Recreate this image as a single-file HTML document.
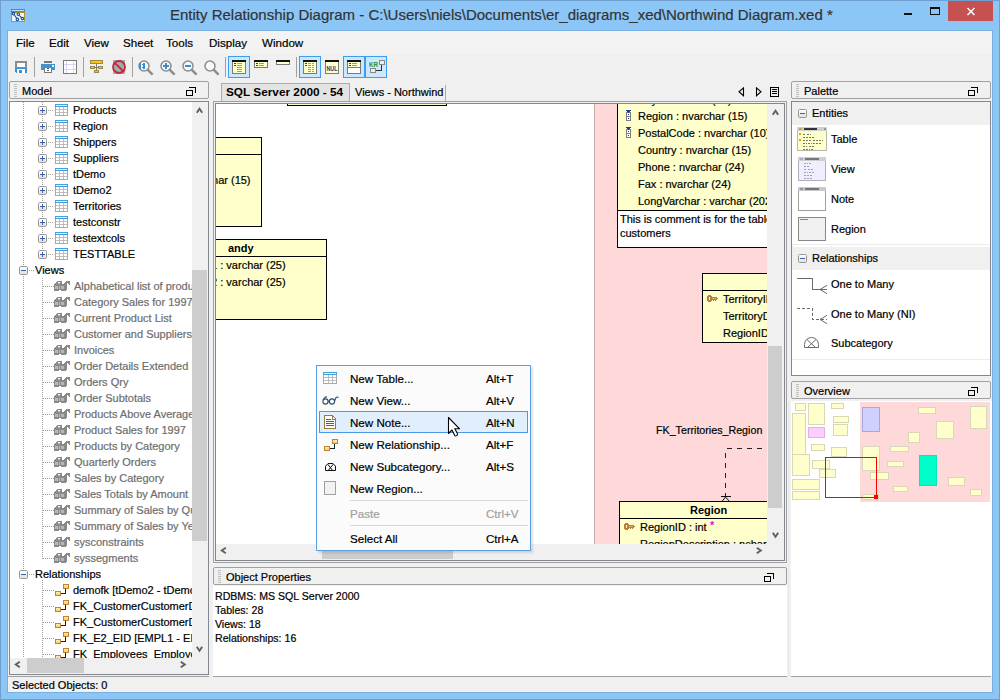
<!DOCTYPE html><html><head><meta charset="utf-8"><style>
html,body{margin:0;padding:0;}
body{width:1000px;height:700px;overflow:hidden;position:relative;background:#8cc6f7;font-family:'Liberation Sans', sans-serif;}
div,svg{box-sizing:border-box;}
.t{-webkit-text-stroke:0.2px currentColor;}
</style></head><body>
<div style="position:absolute;left:0px;top:0px;width:1000px;height:700px;border:1px solid #6e9fcf;"></div>
<div style="position:absolute;left:7px;top:30px;width:986px;height:663px;border:1px solid #79aee0;"></div>
<div style="position:absolute;left:8px;top:31px;width:984px;height:661px;background:#f0f0f0;"></div>
<svg style="position:absolute;left:11px;top:9px;" width="14" height="13" viewBox="0 0 14 13" shape-rendering="crispEdges"><rect x="0.5" y="3.5" width="13" height="9" fill="#eef7ff" stroke="#b8902c"/>
<rect x="0" y="0" width="14" height="3" fill="#5a86b8"/><rect x="1" y="1" width="12" height="1" fill="#c4e0f4"/>
<g fill="none" stroke="#1a4f93" stroke-width="1.1" shape-rendering="geometricPrecision">
<circle cx="2.5" cy="4.6" r="1.25"/><circle cx="7.3" cy="5.3" r="1.25"/><circle cx="6.4" cy="10.4" r="1.25"/><circle cx="11.4" cy="9.6" r="1.25"/>
<path d="M3.3 5.7 L5.6 9.2 M8.2 6.3 L10.5 8.6"/></g></svg>
<div class="t" style="position:absolute;left:170px;top:5px;font:normal 15px/20px 'Liberation Sans', sans-serif;color:#333;white-space:pre;">Entity Relationship Diagram - C:\Users\niels\Documents\er_diagrams_xed\Northwind Diagram.xed *</div>
<div style="position:absolute;left:904px;top:13px;width:8px;height:2px;background:#111;"></div>
<div style="position:absolute;left:930px;top:7px;width:10px;height:8px;border:1px solid #111;border-top-width:2px;"></div>
<div style="position:absolute;left:948px;top:1px;width:45px;height:20px;background:#c75050;"></div>
<svg style="position:absolute;left:966px;top:7px;" width="10" height="9" viewBox="0 0 10 9" shape-rendering="crispEdges"><path d="M1.5 1 L8.5 8 M8.5 1 L1.5 8" stroke="#fff" stroke-width="1.5" shape-rendering="geometricPrecision"/></svg>
<div style="position:absolute;left:8px;top:31px;width:984px;height:23px;background:#f3f3f3;"></div>
<div class="t" style="position:absolute;left:16px;top:35px;font:normal 11px/16px 'Liberation Sans', sans-serif;color:#000;white-space:pre;font-size:11.6px;">File</div>
<div class="t" style="position:absolute;left:49px;top:35px;font:normal 11px/16px 'Liberation Sans', sans-serif;color:#000;white-space:pre;font-size:11.6px;">Edit</div>
<div class="t" style="position:absolute;left:84px;top:35px;font:normal 11px/16px 'Liberation Sans', sans-serif;color:#000;white-space:pre;font-size:11.6px;">View</div>
<div class="t" style="position:absolute;left:123px;top:35px;font:normal 11px/16px 'Liberation Sans', sans-serif;color:#000;white-space:pre;font-size:11.6px;">Sheet</div>
<div class="t" style="position:absolute;left:166px;top:35px;font:normal 11px/16px 'Liberation Sans', sans-serif;color:#000;white-space:pre;font-size:11.6px;">Tools</div>
<div class="t" style="position:absolute;left:209px;top:35px;font:normal 11px/16px 'Liberation Sans', sans-serif;color:#000;white-space:pre;font-size:11.6px;">Display</div>
<div class="t" style="position:absolute;left:262px;top:35px;font:normal 11px/16px 'Liberation Sans', sans-serif;color:#000;white-space:pre;font-size:11.6px;">Window</div>
<svg style="position:absolute;left:15px;top:61px;" width="12" height="12" viewBox="0 0 12 12" shape-rendering="crispEdges"><rect x="0" y="0" width="12" height="7" fill="#8c8c8c"/><rect x="2" y="2" width="8" height="4" fill="#fff"/><rect x="0" y="7" width="12" height="5" fill="#3d8fd0"/><rect x="2" y="8" width="8" height="4" fill="#fff"/><rect x="4" y="9" width="3" height="3" fill="#3d8fd0"/><rect x="0" y="11" width="1" height="1" fill="#f0f0f0"/></svg>
<div style="position:absolute;left:34px;top:57px;width:1px;height:20px;background:#a0a0a0;"></div>
<svg style="position:absolute;left:41px;top:61px;" width="15" height="12" viewBox="0 0 15 12" shape-rendering="crispEdges"><rect x="3" y="0" width="8" height="2" fill="#7a7a7a"/><rect x="0" y="3" width="14" height="6" fill="#3f93cf"/><rect x="11" y="4" width="2" height="2" fill="#e8f4ff"/><rect x="3" y="7" width="8" height="5" fill="#7a7a7a"/><rect x="4" y="7" width="6" height="4" fill="#fff"/><rect x="6" y="7" width="2" height="1" fill="#555"/><rect x="6" y="9" width="2" height="1" fill="#555"/></svg>
<svg style="position:absolute;left:63px;top:60px;" width="14" height="14" viewBox="0 0 14 14" shape-rendering="crispEdges"><rect x="0.5" y="0.5" width="13" height="13" fill="#fff" stroke="#7a7a7a"/><path d="M3.5 1V13 M10.5 1V13 M1 4.5H13 M1 9.5H13" stroke="#d4d4ff"/></svg>
<div style="position:absolute;left:83px;top:57px;width:1px;height:20px;background:#a0a0a0;"></div>
<svg style="position:absolute;left:90px;top:60px;" width="13" height="13" viewBox="0 0 13 13" shape-rendering="crispEdges"><rect x="0" y="0" width="13" height="4" fill="#f5b800"/><rect x="0.5" y="0.5" width="12" height="3" fill="#ffc400" stroke="#9a8a50"/><rect x="0.5" y="6.5" width="4" height="2" fill="#ffc400" stroke="#9a8a50"/><rect x="8.5" y="6.5" width="4" height="2" fill="#ffc400" stroke="#9a8a50"/><rect x="4.5" y="10.5" width="4" height="2" fill="#ffc400" stroke="#9a8a50"/><path d="M6.5 4V10 M5 7.5H8" stroke="#7a7a7a"/></svg>
<svg style="position:absolute;left:112px;top:59px;" width="15" height="16" viewBox="0 0 15 16" shape-rendering="crispEdges"><rect x="1" y="1" width="12" height="14" fill="#a9a9a9"/><circle cx="7" cy="8" r="6" fill="none" stroke="#c4283a" stroke-width="1.8" shape-rendering="geometricPrecision"/><path d="M2.8 3.8 L11.2 12.2" stroke="#c4283a" stroke-width="1.8" shape-rendering="geometricPrecision"/></svg>
<div style="position:absolute;left:132px;top:57px;width:1px;height:20px;background:#a0a0a0;"></div>
<svg style="position:absolute;left:138px;top:59px;" width="17" height="17" viewBox="0 0 17 17" shape-rendering="crispEdges"><g shape-rendering="geometricPrecision"><circle cx="6" cy="7" r="5" fill="#f8f8f8" stroke="#8c8c8c" stroke-width="1.5"/><path d="M9.4 10.4 L14.6 15.6" stroke="#8c8c8c" stroke-width="2.4"/></g><rect x="1" y="4" width="2" height="6" fill="#3a8fd0"/><rect x="5" y="4" width="2" height="6" fill="#3a8fd0"/><rect x="4" y="5" width="1" height="1" fill="#3a8fd0"/><rect x="4" y="8" width="1" height="1" fill="#3a8fd0"/></svg>
<svg style="position:absolute;left:160px;top:59px;" width="17" height="17" viewBox="0 0 17 17" shape-rendering="crispEdges"><g shape-rendering="geometricPrecision"><circle cx="6" cy="7" r="5" fill="#f8f8f8" stroke="#8c8c8c" stroke-width="1.5"/><path d="M9.4 10.4 L14.6 15.6" stroke="#8c8c8c" stroke-width="2.4"/></g><rect x="3" y="6" width="6" height="2" fill="#3a8fd0"/><rect x="5" y="4" width="2" height="6" fill="#3a8fd0"/></svg>
<svg style="position:absolute;left:182px;top:59px;" width="17" height="17" viewBox="0 0 17 17" shape-rendering="crispEdges"><g shape-rendering="geometricPrecision"><circle cx="6" cy="7" r="5" fill="#f8f8f8" stroke="#8c8c8c" stroke-width="1.5"/><path d="M9.4 10.4 L14.6 15.6" stroke="#8c8c8c" stroke-width="2.4"/></g><rect x="3" y="6" width="6" height="2" fill="#3a8fd0"/></svg>
<svg style="position:absolute;left:204px;top:59px;" width="17" height="17" viewBox="0 0 17 17" shape-rendering="crispEdges"><g shape-rendering="geometricPrecision"><circle cx="6" cy="7" r="5" fill="#f8f8f8" stroke="#8c8c8c" stroke-width="1.5"/><path d="M9.4 10.4 L14.6 15.6" stroke="#8c8c8c" stroke-width="2.4"/></g></svg>
<div style="position:absolute;left:225px;top:57px;width:1px;height:20px;background:#a0a0a0;"></div>
<div style="position:absolute;left:228px;top:56px;width:22px;height:22px;background:#cce8ff;border:1px solid #3d9df0;"></div>
<svg style="position:absolute;left:232px;top:60px;" width="14" height="14" viewBox="0 0 14 14" shape-rendering="crispEdges"><rect x="0.5" y="0.5" width="13" height="13" fill="#ffffcc" stroke="#7a7a7a"/><rect x="0" y="0" width="14" height="2" fill="#111"/><rect x="2" y="3" width="2" height="1" fill="#1f3f8f"/><rect x="5" y="3" width="5" height="1" fill="#999"/><rect x="2" y="5" width="2" height="1" fill="#1f3f8f"/><rect x="5" y="5" width="5" height="1" fill="#999"/><rect x="5" y="7" width="5" height="1" fill="#999"/><rect x="5" y="9" width="5" height="1" fill="#999"/><rect x="5" y="11" width="5" height="1" fill="#999"/></svg>
<svg style="position:absolute;left:254px;top:60px;" width="14" height="8" viewBox="0 0 14 8" shape-rendering="crispEdges"><rect x="0.5" y="0.5" width="13" height="7" fill="#ffffcc" stroke="#7a7a7a"/><rect x="0" y="0" width="14" height="2" fill="#111"/><rect x="2" y="3" width="2" height="1" fill="#1f3f8f"/><rect x="5" y="3" width="5" height="1" fill="#999"/><rect x="2" y="5" width="2" height="1" fill="#1f3f8f"/><rect x="5" y="5" width="5" height="1" fill="#999"/></svg>
<svg style="position:absolute;left:276px;top:60px;" width="14" height="5" viewBox="0 0 14 5" shape-rendering="crispEdges"><rect x="0.5" y="0.5" width="13" height="4" fill="#ffffcc" stroke="#7a7a7a"/><rect x="0" y="0" width="14" height="2" fill="#111"/></svg>
<div style="position:absolute;left:296px;top:57px;width:1px;height:20px;background:#a0a0a0;"></div>
<div style="position:absolute;left:299px;top:56px;width:22px;height:22px;background:#cce8ff;border:1px solid #3d9df0;"></div>
<svg style="position:absolute;left:303px;top:60px;" width="14" height="14" viewBox="0 0 14 14" shape-rendering="crispEdges"><rect x="0.5" y="0.5" width="13" height="13" fill="#ffffcc" stroke="#7a7a7a"/><rect x="0" y="0" width="14" height="2" fill="#111"/><rect x="2" y="3" width="2" height="1" fill="#1f3f8f"/><rect x="2" y="5" width="2" height="1" fill="#1f3f8f"/><rect x="5" y="3" width="3" height="1" fill="#999"/><rect x="9" y="3" width="2" height="1" fill="#999"/><rect x="5" y="5" width="3" height="1" fill="#999"/><rect x="9" y="5" width="2" height="1" fill="#999"/><rect x="5" y="7" width="3" height="1" fill="#999"/><rect x="9" y="7" width="2" height="1" fill="#999"/><rect x="5" y="9" width="3" height="1" fill="#999"/><rect x="9" y="9" width="2" height="1" fill="#999"/><rect x="5" y="11" width="3" height="1" fill="#999"/><rect x="9" y="11" width="2" height="1" fill="#999"/></svg>
<svg style="position:absolute;left:325px;top:60px;" width="14" height="14" viewBox="0 0 14 14" shape-rendering="crispEdges"><rect x="0.5" y="0.5" width="13" height="13" fill="#ffffcc" stroke="#7a7a7a"/><rect x="0" y="0" width="14" height="2" fill="#111"/></svg>
<svg style="position:absolute;left:325px;top:64px;" width="14" height="7" viewBox="0 0 14 7" shape-rendering="crispEdges"><text x="7" y="6.5" text-anchor="middle" font-family="Liberation Sans" font-weight="bold" font-size="7.5" fill="#1a3a80" textLength="11" lengthAdjust="spacingAndGlyphs">NUL</text></svg>
<div style="position:absolute;left:343px;top:56px;width:22px;height:22px;background:#cce8ff;border:1px solid #3d9df0;"></div>
<svg style="position:absolute;left:347px;top:60px;" width="14" height="14" viewBox="0 0 14 14" shape-rendering="crispEdges"><rect x="0.5" y="0.5" width="13" height="13" fill="#fff" stroke="#7a7a7a"/><rect x="0" y="0" width="14" height="2" fill="#111"/><rect x="1" y="2" width="12" height="5" fill="#ffffcc"/><rect x="2" y="3" width="2" height="1" fill="#1f3f8f"/><rect x="5" y="3" width="5" height="1" fill="#999"/><rect x="2" y="5" width="2" height="1" fill="#1f3f8f"/><rect x="5" y="5" width="5" height="1" fill="#999"/><rect x="0" y="7" width="14" height="1" fill="#7a7a7a"/></svg>
<div style="position:absolute;left:365px;top:56px;width:22px;height:22px;background:#cce8ff;border:1px solid #3d9df0;"></div>
<svg style="position:absolute;left:369px;top:59px;" width="16" height="16" viewBox="0 0 16 16" shape-rendering="crispEdges"><rect x="10.5" y="1.5" width="5" height="4" fill="#eee" stroke="#888"/><rect x="1.5" y="9.5" width="5" height="4" fill="#eee" stroke="#888"/><path d="M7 11.5H12.5V6" fill="none" stroke="#333"/><text x="0" y="8" font-family="Liberation Sans" font-size="7" font-weight="bold" fill="#2f8f2f" textLength="9" lengthAdjust="spacingAndGlyphs">KR</text></svg>
<div style="position:absolute;left:9px;top:81px;width:200px;height:18px;border:1px solid #a0a0a0;border-radius:2px;background:#f0f0f0;"></div>
<svg style="position:absolute;left:14px;top:84px;" width="3" height="14" viewBox="0 0 3 14" shape-rendering="crispEdges"><rect x="0" y="0" width="3" height="1" fill="#c0c0c0"/><rect x="0" y="2" width="3" height="1" fill="#c0c0c0"/><rect x="0" y="4" width="3" height="1" fill="#c0c0c0"/><rect x="0" y="6" width="3" height="1" fill="#c0c0c0"/><rect x="0" y="8" width="3" height="1" fill="#c0c0c0"/><rect x="0" y="10" width="3" height="1" fill="#c0c0c0"/><rect x="0" y="12" width="3" height="1" fill="#c0c0c0"/></svg>
<div class="t" style="position:absolute;left:22px;top:83px;font:normal 11px/16px 'Liberation Sans', sans-serif;color:#000;white-space:pre;">Model</div>
<svg style="position:absolute;left:186px;top:87px;" width="10" height="9" viewBox="0 0 10 9" shape-rendering="crispEdges"><path d="M3 0.5H9.5V6" fill="none" stroke="#000"/><rect x="0.5" y="3.5" width="6" height="5" fill="none" stroke="#000" stroke-width="1"/></svg>
<div style="position:absolute;left:9px;top:101px;width:200px;height:574px;border:1px solid #828790;background:#fff;"></div>
<div style="position:absolute;left:10px;top:102px;width:182px;height:556px;overflow:hidden;">
<div style="position:absolute;left:13px;top:0px;width:1px;height:164px;background:repeating-linear-gradient(to bottom,#a0a0a0 0,#a0a0a0 1px,transparent 1px,transparent 2px);"></div>
<div style="position:absolute;left:13px;top:174px;width:1px;height:294px;background:repeating-linear-gradient(to bottom,#a0a0a0 0,#a0a0a0 1px,transparent 1px,transparent 2px);"></div>
<div style="position:absolute;left:13px;top:482px;width:1px;height:74px;background:repeating-linear-gradient(to bottom,#a0a0a0 0,#a0a0a0 1px,transparent 1px,transparent 2px);"></div>
<div style="position:absolute;left:32px;top:0px;width:1px;height:153px;background:repeating-linear-gradient(to bottom,#a0a0a0 0,#a0a0a0 1px,transparent 1px,transparent 2px);"></div>
<svg style="position:absolute;left:28px;top:4px" width="9" height="9" viewBox="0 0 9 9" shape-rendering="crispEdges"><rect x="1" y="1" width="7" height="4" fill="#fbfbfb"/><rect x="1" y="5" width="7" height="3" fill="#e6e6e6"/><rect x="0.5" y="0.5" width="8" height="8" rx="1.2" fill="none" stroke="#979797" shape-rendering="geometricPrecision"/><rect x="2" y="4" width="5" height="1" fill="#3d5ea8"/><rect x="4" y="2" width="1" height="5" fill="#3d5ea8"/></svg>
<div style="position:absolute;left:38px;top:8px;width:6px;height:1px;background:repeating-linear-gradient(to right,#a0a0a0 0,#a0a0a0 1px,transparent 1px,transparent 2px);"></div>
<svg style="position:absolute;left:45px;top:2px" width="13" height="12" viewBox="0 0 13 12" shape-rendering="crispEdges"><rect x="0.5" y="1.5" width="12" height="10" fill="#fff" stroke="#a9a9a9"/><rect x="0" y="0" width="13" height="3" fill="#47a0d8"/><rect x="1" y="1" width="11" height="1" fill="#dff0fb"/><path d="M4.5 3V11 M8.5 3V11 M1 5.5H12 M1 8.5H12" stroke="#bdbdbd"/></svg>
<div class="t" style="position:absolute;left:63px;top:0px;font:11px/16px 'Liberation Sans', sans-serif;color:#000;white-space:pre;">Products</div>
<svg style="position:absolute;left:28px;top:20px" width="9" height="9" viewBox="0 0 9 9" shape-rendering="crispEdges"><rect x="1" y="1" width="7" height="4" fill="#fbfbfb"/><rect x="1" y="5" width="7" height="3" fill="#e6e6e6"/><rect x="0.5" y="0.5" width="8" height="8" rx="1.2" fill="none" stroke="#979797" shape-rendering="geometricPrecision"/><rect x="2" y="4" width="5" height="1" fill="#3d5ea8"/><rect x="4" y="2" width="1" height="5" fill="#3d5ea8"/></svg>
<div style="position:absolute;left:38px;top:24px;width:6px;height:1px;background:repeating-linear-gradient(to right,#a0a0a0 0,#a0a0a0 1px,transparent 1px,transparent 2px);"></div>
<svg style="position:absolute;left:45px;top:18px" width="13" height="12" viewBox="0 0 13 12" shape-rendering="crispEdges"><rect x="0.5" y="1.5" width="12" height="10" fill="#fff" stroke="#a9a9a9"/><rect x="0" y="0" width="13" height="3" fill="#47a0d8"/><rect x="1" y="1" width="11" height="1" fill="#dff0fb"/><path d="M4.5 3V11 M8.5 3V11 M1 5.5H12 M1 8.5H12" stroke="#bdbdbd"/></svg>
<div class="t" style="position:absolute;left:63px;top:16px;font:11px/16px 'Liberation Sans', sans-serif;color:#000;white-space:pre;">Region</div>
<svg style="position:absolute;left:28px;top:36px" width="9" height="9" viewBox="0 0 9 9" shape-rendering="crispEdges"><rect x="1" y="1" width="7" height="4" fill="#fbfbfb"/><rect x="1" y="5" width="7" height="3" fill="#e6e6e6"/><rect x="0.5" y="0.5" width="8" height="8" rx="1.2" fill="none" stroke="#979797" shape-rendering="geometricPrecision"/><rect x="2" y="4" width="5" height="1" fill="#3d5ea8"/><rect x="4" y="2" width="1" height="5" fill="#3d5ea8"/></svg>
<div style="position:absolute;left:38px;top:40px;width:6px;height:1px;background:repeating-linear-gradient(to right,#a0a0a0 0,#a0a0a0 1px,transparent 1px,transparent 2px);"></div>
<svg style="position:absolute;left:45px;top:34px" width="13" height="12" viewBox="0 0 13 12" shape-rendering="crispEdges"><rect x="0.5" y="1.5" width="12" height="10" fill="#fff" stroke="#a9a9a9"/><rect x="0" y="0" width="13" height="3" fill="#47a0d8"/><rect x="1" y="1" width="11" height="1" fill="#dff0fb"/><path d="M4.5 3V11 M8.5 3V11 M1 5.5H12 M1 8.5H12" stroke="#bdbdbd"/></svg>
<div class="t" style="position:absolute;left:63px;top:32px;font:11px/16px 'Liberation Sans', sans-serif;color:#000;white-space:pre;">Shippers</div>
<svg style="position:absolute;left:28px;top:52px" width="9" height="9" viewBox="0 0 9 9" shape-rendering="crispEdges"><rect x="1" y="1" width="7" height="4" fill="#fbfbfb"/><rect x="1" y="5" width="7" height="3" fill="#e6e6e6"/><rect x="0.5" y="0.5" width="8" height="8" rx="1.2" fill="none" stroke="#979797" shape-rendering="geometricPrecision"/><rect x="2" y="4" width="5" height="1" fill="#3d5ea8"/><rect x="4" y="2" width="1" height="5" fill="#3d5ea8"/></svg>
<div style="position:absolute;left:38px;top:56px;width:6px;height:1px;background:repeating-linear-gradient(to right,#a0a0a0 0,#a0a0a0 1px,transparent 1px,transparent 2px);"></div>
<svg style="position:absolute;left:45px;top:50px" width="13" height="12" viewBox="0 0 13 12" shape-rendering="crispEdges"><rect x="0.5" y="1.5" width="12" height="10" fill="#fff" stroke="#a9a9a9"/><rect x="0" y="0" width="13" height="3" fill="#47a0d8"/><rect x="1" y="1" width="11" height="1" fill="#dff0fb"/><path d="M4.5 3V11 M8.5 3V11 M1 5.5H12 M1 8.5H12" stroke="#bdbdbd"/></svg>
<div class="t" style="position:absolute;left:63px;top:48px;font:11px/16px 'Liberation Sans', sans-serif;color:#000;white-space:pre;">Suppliers</div>
<svg style="position:absolute;left:28px;top:68px" width="9" height="9" viewBox="0 0 9 9" shape-rendering="crispEdges"><rect x="1" y="1" width="7" height="4" fill="#fbfbfb"/><rect x="1" y="5" width="7" height="3" fill="#e6e6e6"/><rect x="0.5" y="0.5" width="8" height="8" rx="1.2" fill="none" stroke="#979797" shape-rendering="geometricPrecision"/><rect x="2" y="4" width="5" height="1" fill="#3d5ea8"/><rect x="4" y="2" width="1" height="5" fill="#3d5ea8"/></svg>
<div style="position:absolute;left:38px;top:72px;width:6px;height:1px;background:repeating-linear-gradient(to right,#a0a0a0 0,#a0a0a0 1px,transparent 1px,transparent 2px);"></div>
<svg style="position:absolute;left:45px;top:66px" width="13" height="12" viewBox="0 0 13 12" shape-rendering="crispEdges"><rect x="0.5" y="1.5" width="12" height="10" fill="#fff" stroke="#a9a9a9"/><rect x="0" y="0" width="13" height="3" fill="#47a0d8"/><rect x="1" y="1" width="11" height="1" fill="#dff0fb"/><path d="M4.5 3V11 M8.5 3V11 M1 5.5H12 M1 8.5H12" stroke="#bdbdbd"/></svg>
<div class="t" style="position:absolute;left:63px;top:64px;font:11px/16px 'Liberation Sans', sans-serif;color:#000;white-space:pre;">tDemo</div>
<svg style="position:absolute;left:28px;top:84px" width="9" height="9" viewBox="0 0 9 9" shape-rendering="crispEdges"><rect x="1" y="1" width="7" height="4" fill="#fbfbfb"/><rect x="1" y="5" width="7" height="3" fill="#e6e6e6"/><rect x="0.5" y="0.5" width="8" height="8" rx="1.2" fill="none" stroke="#979797" shape-rendering="geometricPrecision"/><rect x="2" y="4" width="5" height="1" fill="#3d5ea8"/><rect x="4" y="2" width="1" height="5" fill="#3d5ea8"/></svg>
<div style="position:absolute;left:38px;top:88px;width:6px;height:1px;background:repeating-linear-gradient(to right,#a0a0a0 0,#a0a0a0 1px,transparent 1px,transparent 2px);"></div>
<svg style="position:absolute;left:45px;top:82px" width="13" height="12" viewBox="0 0 13 12" shape-rendering="crispEdges"><rect x="0.5" y="1.5" width="12" height="10" fill="#fff" stroke="#a9a9a9"/><rect x="0" y="0" width="13" height="3" fill="#47a0d8"/><rect x="1" y="1" width="11" height="1" fill="#dff0fb"/><path d="M4.5 3V11 M8.5 3V11 M1 5.5H12 M1 8.5H12" stroke="#bdbdbd"/></svg>
<div class="t" style="position:absolute;left:63px;top:80px;font:11px/16px 'Liberation Sans', sans-serif;color:#000;white-space:pre;">tDemo2</div>
<svg style="position:absolute;left:28px;top:100px" width="9" height="9" viewBox="0 0 9 9" shape-rendering="crispEdges"><rect x="1" y="1" width="7" height="4" fill="#fbfbfb"/><rect x="1" y="5" width="7" height="3" fill="#e6e6e6"/><rect x="0.5" y="0.5" width="8" height="8" rx="1.2" fill="none" stroke="#979797" shape-rendering="geometricPrecision"/><rect x="2" y="4" width="5" height="1" fill="#3d5ea8"/><rect x="4" y="2" width="1" height="5" fill="#3d5ea8"/></svg>
<div style="position:absolute;left:38px;top:104px;width:6px;height:1px;background:repeating-linear-gradient(to right,#a0a0a0 0,#a0a0a0 1px,transparent 1px,transparent 2px);"></div>
<svg style="position:absolute;left:45px;top:98px" width="13" height="12" viewBox="0 0 13 12" shape-rendering="crispEdges"><rect x="0.5" y="1.5" width="12" height="10" fill="#fff" stroke="#a9a9a9"/><rect x="0" y="0" width="13" height="3" fill="#47a0d8"/><rect x="1" y="1" width="11" height="1" fill="#dff0fb"/><path d="M4.5 3V11 M8.5 3V11 M1 5.5H12 M1 8.5H12" stroke="#bdbdbd"/></svg>
<div class="t" style="position:absolute;left:63px;top:96px;font:11px/16px 'Liberation Sans', sans-serif;color:#000;white-space:pre;">Territories</div>
<svg style="position:absolute;left:28px;top:116px" width="9" height="9" viewBox="0 0 9 9" shape-rendering="crispEdges"><rect x="1" y="1" width="7" height="4" fill="#fbfbfb"/><rect x="1" y="5" width="7" height="3" fill="#e6e6e6"/><rect x="0.5" y="0.5" width="8" height="8" rx="1.2" fill="none" stroke="#979797" shape-rendering="geometricPrecision"/><rect x="2" y="4" width="5" height="1" fill="#3d5ea8"/><rect x="4" y="2" width="1" height="5" fill="#3d5ea8"/></svg>
<div style="position:absolute;left:38px;top:120px;width:6px;height:1px;background:repeating-linear-gradient(to right,#a0a0a0 0,#a0a0a0 1px,transparent 1px,transparent 2px);"></div>
<svg style="position:absolute;left:45px;top:114px" width="13" height="12" viewBox="0 0 13 12" shape-rendering="crispEdges"><rect x="0.5" y="1.5" width="12" height="10" fill="#fff" stroke="#a9a9a9"/><rect x="0" y="0" width="13" height="3" fill="#47a0d8"/><rect x="1" y="1" width="11" height="1" fill="#dff0fb"/><path d="M4.5 3V11 M8.5 3V11 M1 5.5H12 M1 8.5H12" stroke="#bdbdbd"/></svg>
<div class="t" style="position:absolute;left:63px;top:112px;font:11px/16px 'Liberation Sans', sans-serif;color:#000;white-space:pre;">testconstr</div>
<svg style="position:absolute;left:28px;top:132px" width="9" height="9" viewBox="0 0 9 9" shape-rendering="crispEdges"><rect x="1" y="1" width="7" height="4" fill="#fbfbfb"/><rect x="1" y="5" width="7" height="3" fill="#e6e6e6"/><rect x="0.5" y="0.5" width="8" height="8" rx="1.2" fill="none" stroke="#979797" shape-rendering="geometricPrecision"/><rect x="2" y="4" width="5" height="1" fill="#3d5ea8"/><rect x="4" y="2" width="1" height="5" fill="#3d5ea8"/></svg>
<div style="position:absolute;left:38px;top:136px;width:6px;height:1px;background:repeating-linear-gradient(to right,#a0a0a0 0,#a0a0a0 1px,transparent 1px,transparent 2px);"></div>
<svg style="position:absolute;left:45px;top:130px" width="13" height="12" viewBox="0 0 13 12" shape-rendering="crispEdges"><rect x="0.5" y="1.5" width="12" height="10" fill="#fff" stroke="#a9a9a9"/><rect x="0" y="0" width="13" height="3" fill="#47a0d8"/><rect x="1" y="1" width="11" height="1" fill="#dff0fb"/><path d="M4.5 3V11 M8.5 3V11 M1 5.5H12 M1 8.5H12" stroke="#bdbdbd"/></svg>
<div class="t" style="position:absolute;left:63px;top:128px;font:11px/16px 'Liberation Sans', sans-serif;color:#000;white-space:pre;">testextcols</div>
<svg style="position:absolute;left:28px;top:148px" width="9" height="9" viewBox="0 0 9 9" shape-rendering="crispEdges"><rect x="1" y="1" width="7" height="4" fill="#fbfbfb"/><rect x="1" y="5" width="7" height="3" fill="#e6e6e6"/><rect x="0.5" y="0.5" width="8" height="8" rx="1.2" fill="none" stroke="#979797" shape-rendering="geometricPrecision"/><rect x="2" y="4" width="5" height="1" fill="#3d5ea8"/><rect x="4" y="2" width="1" height="5" fill="#3d5ea8"/></svg>
<div style="position:absolute;left:38px;top:152px;width:6px;height:1px;background:repeating-linear-gradient(to right,#a0a0a0 0,#a0a0a0 1px,transparent 1px,transparent 2px);"></div>
<svg style="position:absolute;left:45px;top:146px" width="13" height="12" viewBox="0 0 13 12" shape-rendering="crispEdges"><rect x="0.5" y="1.5" width="12" height="10" fill="#fff" stroke="#a9a9a9"/><rect x="0" y="0" width="13" height="3" fill="#47a0d8"/><rect x="1" y="1" width="11" height="1" fill="#dff0fb"/><path d="M4.5 3V11 M8.5 3V11 M1 5.5H12 M1 8.5H12" stroke="#bdbdbd"/></svg>
<div class="t" style="position:absolute;left:63px;top:144px;font:11px/16px 'Liberation Sans', sans-serif;color:#000;white-space:pre;">TESTTABLE</div>
<svg style="position:absolute;left:9px;top:164px" width="9" height="9" viewBox="0 0 9 9" shape-rendering="crispEdges"><rect x="1" y="1" width="7" height="4" fill="#fbfbfb"/><rect x="1" y="5" width="7" height="3" fill="#e6e6e6"/><rect x="0.5" y="0.5" width="8" height="8" rx="1.2" fill="none" stroke="#979797" shape-rendering="geometricPrecision"/><rect x="2" y="4" width="5" height="1" fill="#3d5ea8"/></svg>
<div style="position:absolute;left:19px;top:168px;width:5px;height:1px;background:repeating-linear-gradient(to right,#a0a0a0 0,#a0a0a0 1px,transparent 1px,transparent 2px);"></div>
<div class="t" style="position:absolute;left:25px;top:160px;font:11px/16px 'Liberation Sans', sans-serif;color:#000;white-space:pre;">Views</div>
<div style="position:absolute;left:32px;top:176px;width:1px;height:281px;background:repeating-linear-gradient(to bottom,#a0a0a0 0,#a0a0a0 1px,transparent 1px,transparent 2px);"></div>
<div style="position:absolute;left:33px;top:184px;width:11px;height:1px;background:repeating-linear-gradient(to right,#a0a0a0 0,#a0a0a0 1px,transparent 1px,transparent 2px);"></div>
<svg style="position:absolute;left:44px;top:179px" width="17" height="10" viewBox="0 0 17 10" shape-rendering="crispEdges"><rect x="3" y="0" width="5" height="1" fill="#8a8a8a"/><rect x="12" y="0" width="4" height="1" fill="#8a8a8a"/><rect x="2" y="1" width="2" height="1" fill="#8a8a8a"/><rect x="6" y="1" width="2" height="1" fill="#8a8a8a"/><rect x="11" y="1" width="5" height="1" fill="#8a8a8a"/><rect x="1" y="2" width="7" height="1" fill="#8a8a8a"/><rect x="10" y="2" width="3" height="1" fill="#8a8a8a"/><rect x="14" y="2" width="2" height="1" fill="#8a8a8a"/><rect x="0" y="3" width="13" height="1" fill="#8a8a8a"/><rect x="15" y="3" width="1" height="1" fill="#8a8a8a"/><rect x="0" y="4" width="13" height="1" fill="#8a8a8a"/><rect x="0" y="5" width="13" height="1" fill="#8a8a8a"/><rect x="0" y="6" width="13" height="1" fill="#8a8a8a"/><rect x="0" y="7" width="13" height="1" fill="#8a8a8a"/><rect x="0" y="8" width="13" height="1" fill="#8a8a8a"/><rect x="0" y="9" width="5" height="1" fill="#8a8a8a"/><rect x="7" y="9" width="5" height="1" fill="#8a8a8a"/><rect x="4" y="2" width="2" height="1" fill="#b8b8b8"/><rect x="1" y="5" width="3" height="3" fill="#b8b8b8"/><rect x="5" y="5" width="1" height="3" fill="#b8b8b8"/><rect x="7" y="5" width="3" height="3" fill="#b8b8b8"/></svg>
<div class="t" style="position:absolute;left:64px;top:176px;font:11px/16px 'Liberation Sans', sans-serif;color:#6d6d6d;white-space:pre;">Alphabetical list of products</div>
<div style="position:absolute;left:33px;top:200px;width:11px;height:1px;background:repeating-linear-gradient(to right,#a0a0a0 0,#a0a0a0 1px,transparent 1px,transparent 2px);"></div>
<svg style="position:absolute;left:44px;top:195px" width="17" height="10" viewBox="0 0 17 10" shape-rendering="crispEdges"><rect x="3" y="0" width="5" height="1" fill="#8a8a8a"/><rect x="12" y="0" width="4" height="1" fill="#8a8a8a"/><rect x="2" y="1" width="2" height="1" fill="#8a8a8a"/><rect x="6" y="1" width="2" height="1" fill="#8a8a8a"/><rect x="11" y="1" width="5" height="1" fill="#8a8a8a"/><rect x="1" y="2" width="7" height="1" fill="#8a8a8a"/><rect x="10" y="2" width="3" height="1" fill="#8a8a8a"/><rect x="14" y="2" width="2" height="1" fill="#8a8a8a"/><rect x="0" y="3" width="13" height="1" fill="#8a8a8a"/><rect x="15" y="3" width="1" height="1" fill="#8a8a8a"/><rect x="0" y="4" width="13" height="1" fill="#8a8a8a"/><rect x="0" y="5" width="13" height="1" fill="#8a8a8a"/><rect x="0" y="6" width="13" height="1" fill="#8a8a8a"/><rect x="0" y="7" width="13" height="1" fill="#8a8a8a"/><rect x="0" y="8" width="13" height="1" fill="#8a8a8a"/><rect x="0" y="9" width="5" height="1" fill="#8a8a8a"/><rect x="7" y="9" width="5" height="1" fill="#8a8a8a"/><rect x="4" y="2" width="2" height="1" fill="#b8b8b8"/><rect x="1" y="5" width="3" height="3" fill="#b8b8b8"/><rect x="5" y="5" width="1" height="3" fill="#b8b8b8"/><rect x="7" y="5" width="3" height="3" fill="#b8b8b8"/></svg>
<div class="t" style="position:absolute;left:64px;top:192px;font:11px/16px 'Liberation Sans', sans-serif;color:#6d6d6d;white-space:pre;">Category Sales for 1997</div>
<div style="position:absolute;left:33px;top:216px;width:11px;height:1px;background:repeating-linear-gradient(to right,#a0a0a0 0,#a0a0a0 1px,transparent 1px,transparent 2px);"></div>
<svg style="position:absolute;left:44px;top:211px" width="17" height="10" viewBox="0 0 17 10" shape-rendering="crispEdges"><rect x="3" y="0" width="5" height="1" fill="#8a8a8a"/><rect x="12" y="0" width="4" height="1" fill="#8a8a8a"/><rect x="2" y="1" width="2" height="1" fill="#8a8a8a"/><rect x="6" y="1" width="2" height="1" fill="#8a8a8a"/><rect x="11" y="1" width="5" height="1" fill="#8a8a8a"/><rect x="1" y="2" width="7" height="1" fill="#8a8a8a"/><rect x="10" y="2" width="3" height="1" fill="#8a8a8a"/><rect x="14" y="2" width="2" height="1" fill="#8a8a8a"/><rect x="0" y="3" width="13" height="1" fill="#8a8a8a"/><rect x="15" y="3" width="1" height="1" fill="#8a8a8a"/><rect x="0" y="4" width="13" height="1" fill="#8a8a8a"/><rect x="0" y="5" width="13" height="1" fill="#8a8a8a"/><rect x="0" y="6" width="13" height="1" fill="#8a8a8a"/><rect x="0" y="7" width="13" height="1" fill="#8a8a8a"/><rect x="0" y="8" width="13" height="1" fill="#8a8a8a"/><rect x="0" y="9" width="5" height="1" fill="#8a8a8a"/><rect x="7" y="9" width="5" height="1" fill="#8a8a8a"/><rect x="4" y="2" width="2" height="1" fill="#b8b8b8"/><rect x="1" y="5" width="3" height="3" fill="#b8b8b8"/><rect x="5" y="5" width="1" height="3" fill="#b8b8b8"/><rect x="7" y="5" width="3" height="3" fill="#b8b8b8"/></svg>
<div class="t" style="position:absolute;left:64px;top:208px;font:11px/16px 'Liberation Sans', sans-serif;color:#6d6d6d;white-space:pre;">Current Product List</div>
<div style="position:absolute;left:33px;top:232px;width:11px;height:1px;background:repeating-linear-gradient(to right,#a0a0a0 0,#a0a0a0 1px,transparent 1px,transparent 2px);"></div>
<svg style="position:absolute;left:44px;top:227px" width="17" height="10" viewBox="0 0 17 10" shape-rendering="crispEdges"><rect x="3" y="0" width="5" height="1" fill="#8a8a8a"/><rect x="12" y="0" width="4" height="1" fill="#8a8a8a"/><rect x="2" y="1" width="2" height="1" fill="#8a8a8a"/><rect x="6" y="1" width="2" height="1" fill="#8a8a8a"/><rect x="11" y="1" width="5" height="1" fill="#8a8a8a"/><rect x="1" y="2" width="7" height="1" fill="#8a8a8a"/><rect x="10" y="2" width="3" height="1" fill="#8a8a8a"/><rect x="14" y="2" width="2" height="1" fill="#8a8a8a"/><rect x="0" y="3" width="13" height="1" fill="#8a8a8a"/><rect x="15" y="3" width="1" height="1" fill="#8a8a8a"/><rect x="0" y="4" width="13" height="1" fill="#8a8a8a"/><rect x="0" y="5" width="13" height="1" fill="#8a8a8a"/><rect x="0" y="6" width="13" height="1" fill="#8a8a8a"/><rect x="0" y="7" width="13" height="1" fill="#8a8a8a"/><rect x="0" y="8" width="13" height="1" fill="#8a8a8a"/><rect x="0" y="9" width="5" height="1" fill="#8a8a8a"/><rect x="7" y="9" width="5" height="1" fill="#8a8a8a"/><rect x="4" y="2" width="2" height="1" fill="#b8b8b8"/><rect x="1" y="5" width="3" height="3" fill="#b8b8b8"/><rect x="5" y="5" width="1" height="3" fill="#b8b8b8"/><rect x="7" y="5" width="3" height="3" fill="#b8b8b8"/></svg>
<div class="t" style="position:absolute;left:64px;top:224px;font:11px/16px 'Liberation Sans', sans-serif;color:#6d6d6d;white-space:pre;">Customer and Suppliers by City</div>
<div style="position:absolute;left:33px;top:248px;width:11px;height:1px;background:repeating-linear-gradient(to right,#a0a0a0 0,#a0a0a0 1px,transparent 1px,transparent 2px);"></div>
<svg style="position:absolute;left:44px;top:243px" width="17" height="10" viewBox="0 0 17 10" shape-rendering="crispEdges"><rect x="3" y="0" width="5" height="1" fill="#8a8a8a"/><rect x="12" y="0" width="4" height="1" fill="#8a8a8a"/><rect x="2" y="1" width="2" height="1" fill="#8a8a8a"/><rect x="6" y="1" width="2" height="1" fill="#8a8a8a"/><rect x="11" y="1" width="5" height="1" fill="#8a8a8a"/><rect x="1" y="2" width="7" height="1" fill="#8a8a8a"/><rect x="10" y="2" width="3" height="1" fill="#8a8a8a"/><rect x="14" y="2" width="2" height="1" fill="#8a8a8a"/><rect x="0" y="3" width="13" height="1" fill="#8a8a8a"/><rect x="15" y="3" width="1" height="1" fill="#8a8a8a"/><rect x="0" y="4" width="13" height="1" fill="#8a8a8a"/><rect x="0" y="5" width="13" height="1" fill="#8a8a8a"/><rect x="0" y="6" width="13" height="1" fill="#8a8a8a"/><rect x="0" y="7" width="13" height="1" fill="#8a8a8a"/><rect x="0" y="8" width="13" height="1" fill="#8a8a8a"/><rect x="0" y="9" width="5" height="1" fill="#8a8a8a"/><rect x="7" y="9" width="5" height="1" fill="#8a8a8a"/><rect x="4" y="2" width="2" height="1" fill="#b8b8b8"/><rect x="1" y="5" width="3" height="3" fill="#b8b8b8"/><rect x="5" y="5" width="1" height="3" fill="#b8b8b8"/><rect x="7" y="5" width="3" height="3" fill="#b8b8b8"/></svg>
<div class="t" style="position:absolute;left:64px;top:240px;font:11px/16px 'Liberation Sans', sans-serif;color:#6d6d6d;white-space:pre;">Invoices</div>
<div style="position:absolute;left:33px;top:264px;width:11px;height:1px;background:repeating-linear-gradient(to right,#a0a0a0 0,#a0a0a0 1px,transparent 1px,transparent 2px);"></div>
<svg style="position:absolute;left:44px;top:259px" width="17" height="10" viewBox="0 0 17 10" shape-rendering="crispEdges"><rect x="3" y="0" width="5" height="1" fill="#8a8a8a"/><rect x="12" y="0" width="4" height="1" fill="#8a8a8a"/><rect x="2" y="1" width="2" height="1" fill="#8a8a8a"/><rect x="6" y="1" width="2" height="1" fill="#8a8a8a"/><rect x="11" y="1" width="5" height="1" fill="#8a8a8a"/><rect x="1" y="2" width="7" height="1" fill="#8a8a8a"/><rect x="10" y="2" width="3" height="1" fill="#8a8a8a"/><rect x="14" y="2" width="2" height="1" fill="#8a8a8a"/><rect x="0" y="3" width="13" height="1" fill="#8a8a8a"/><rect x="15" y="3" width="1" height="1" fill="#8a8a8a"/><rect x="0" y="4" width="13" height="1" fill="#8a8a8a"/><rect x="0" y="5" width="13" height="1" fill="#8a8a8a"/><rect x="0" y="6" width="13" height="1" fill="#8a8a8a"/><rect x="0" y="7" width="13" height="1" fill="#8a8a8a"/><rect x="0" y="8" width="13" height="1" fill="#8a8a8a"/><rect x="0" y="9" width="5" height="1" fill="#8a8a8a"/><rect x="7" y="9" width="5" height="1" fill="#8a8a8a"/><rect x="4" y="2" width="2" height="1" fill="#b8b8b8"/><rect x="1" y="5" width="3" height="3" fill="#b8b8b8"/><rect x="5" y="5" width="1" height="3" fill="#b8b8b8"/><rect x="7" y="5" width="3" height="3" fill="#b8b8b8"/></svg>
<div class="t" style="position:absolute;left:64px;top:256px;font:11px/16px 'Liberation Sans', sans-serif;color:#6d6d6d;white-space:pre;">Order Details Extended</div>
<div style="position:absolute;left:33px;top:280px;width:11px;height:1px;background:repeating-linear-gradient(to right,#a0a0a0 0,#a0a0a0 1px,transparent 1px,transparent 2px);"></div>
<svg style="position:absolute;left:44px;top:275px" width="17" height="10" viewBox="0 0 17 10" shape-rendering="crispEdges"><rect x="3" y="0" width="5" height="1" fill="#8a8a8a"/><rect x="12" y="0" width="4" height="1" fill="#8a8a8a"/><rect x="2" y="1" width="2" height="1" fill="#8a8a8a"/><rect x="6" y="1" width="2" height="1" fill="#8a8a8a"/><rect x="11" y="1" width="5" height="1" fill="#8a8a8a"/><rect x="1" y="2" width="7" height="1" fill="#8a8a8a"/><rect x="10" y="2" width="3" height="1" fill="#8a8a8a"/><rect x="14" y="2" width="2" height="1" fill="#8a8a8a"/><rect x="0" y="3" width="13" height="1" fill="#8a8a8a"/><rect x="15" y="3" width="1" height="1" fill="#8a8a8a"/><rect x="0" y="4" width="13" height="1" fill="#8a8a8a"/><rect x="0" y="5" width="13" height="1" fill="#8a8a8a"/><rect x="0" y="6" width="13" height="1" fill="#8a8a8a"/><rect x="0" y="7" width="13" height="1" fill="#8a8a8a"/><rect x="0" y="8" width="13" height="1" fill="#8a8a8a"/><rect x="0" y="9" width="5" height="1" fill="#8a8a8a"/><rect x="7" y="9" width="5" height="1" fill="#8a8a8a"/><rect x="4" y="2" width="2" height="1" fill="#b8b8b8"/><rect x="1" y="5" width="3" height="3" fill="#b8b8b8"/><rect x="5" y="5" width="1" height="3" fill="#b8b8b8"/><rect x="7" y="5" width="3" height="3" fill="#b8b8b8"/></svg>
<div class="t" style="position:absolute;left:64px;top:272px;font:11px/16px 'Liberation Sans', sans-serif;color:#6d6d6d;white-space:pre;">Orders Qry</div>
<div style="position:absolute;left:33px;top:296px;width:11px;height:1px;background:repeating-linear-gradient(to right,#a0a0a0 0,#a0a0a0 1px,transparent 1px,transparent 2px);"></div>
<svg style="position:absolute;left:44px;top:291px" width="17" height="10" viewBox="0 0 17 10" shape-rendering="crispEdges"><rect x="3" y="0" width="5" height="1" fill="#8a8a8a"/><rect x="12" y="0" width="4" height="1" fill="#8a8a8a"/><rect x="2" y="1" width="2" height="1" fill="#8a8a8a"/><rect x="6" y="1" width="2" height="1" fill="#8a8a8a"/><rect x="11" y="1" width="5" height="1" fill="#8a8a8a"/><rect x="1" y="2" width="7" height="1" fill="#8a8a8a"/><rect x="10" y="2" width="3" height="1" fill="#8a8a8a"/><rect x="14" y="2" width="2" height="1" fill="#8a8a8a"/><rect x="0" y="3" width="13" height="1" fill="#8a8a8a"/><rect x="15" y="3" width="1" height="1" fill="#8a8a8a"/><rect x="0" y="4" width="13" height="1" fill="#8a8a8a"/><rect x="0" y="5" width="13" height="1" fill="#8a8a8a"/><rect x="0" y="6" width="13" height="1" fill="#8a8a8a"/><rect x="0" y="7" width="13" height="1" fill="#8a8a8a"/><rect x="0" y="8" width="13" height="1" fill="#8a8a8a"/><rect x="0" y="9" width="5" height="1" fill="#8a8a8a"/><rect x="7" y="9" width="5" height="1" fill="#8a8a8a"/><rect x="4" y="2" width="2" height="1" fill="#b8b8b8"/><rect x="1" y="5" width="3" height="3" fill="#b8b8b8"/><rect x="5" y="5" width="1" height="3" fill="#b8b8b8"/><rect x="7" y="5" width="3" height="3" fill="#b8b8b8"/></svg>
<div class="t" style="position:absolute;left:64px;top:288px;font:11px/16px 'Liberation Sans', sans-serif;color:#6d6d6d;white-space:pre;">Order Subtotals</div>
<div style="position:absolute;left:33px;top:312px;width:11px;height:1px;background:repeating-linear-gradient(to right,#a0a0a0 0,#a0a0a0 1px,transparent 1px,transparent 2px);"></div>
<svg style="position:absolute;left:44px;top:307px" width="17" height="10" viewBox="0 0 17 10" shape-rendering="crispEdges"><rect x="3" y="0" width="5" height="1" fill="#8a8a8a"/><rect x="12" y="0" width="4" height="1" fill="#8a8a8a"/><rect x="2" y="1" width="2" height="1" fill="#8a8a8a"/><rect x="6" y="1" width="2" height="1" fill="#8a8a8a"/><rect x="11" y="1" width="5" height="1" fill="#8a8a8a"/><rect x="1" y="2" width="7" height="1" fill="#8a8a8a"/><rect x="10" y="2" width="3" height="1" fill="#8a8a8a"/><rect x="14" y="2" width="2" height="1" fill="#8a8a8a"/><rect x="0" y="3" width="13" height="1" fill="#8a8a8a"/><rect x="15" y="3" width="1" height="1" fill="#8a8a8a"/><rect x="0" y="4" width="13" height="1" fill="#8a8a8a"/><rect x="0" y="5" width="13" height="1" fill="#8a8a8a"/><rect x="0" y="6" width="13" height="1" fill="#8a8a8a"/><rect x="0" y="7" width="13" height="1" fill="#8a8a8a"/><rect x="0" y="8" width="13" height="1" fill="#8a8a8a"/><rect x="0" y="9" width="5" height="1" fill="#8a8a8a"/><rect x="7" y="9" width="5" height="1" fill="#8a8a8a"/><rect x="4" y="2" width="2" height="1" fill="#b8b8b8"/><rect x="1" y="5" width="3" height="3" fill="#b8b8b8"/><rect x="5" y="5" width="1" height="3" fill="#b8b8b8"/><rect x="7" y="5" width="3" height="3" fill="#b8b8b8"/></svg>
<div class="t" style="position:absolute;left:64px;top:304px;font:11px/16px 'Liberation Sans', sans-serif;color:#6d6d6d;white-space:pre;">Products Above Average Price</div>
<div style="position:absolute;left:33px;top:328px;width:11px;height:1px;background:repeating-linear-gradient(to right,#a0a0a0 0,#a0a0a0 1px,transparent 1px,transparent 2px);"></div>
<svg style="position:absolute;left:44px;top:323px" width="17" height="10" viewBox="0 0 17 10" shape-rendering="crispEdges"><rect x="3" y="0" width="5" height="1" fill="#8a8a8a"/><rect x="12" y="0" width="4" height="1" fill="#8a8a8a"/><rect x="2" y="1" width="2" height="1" fill="#8a8a8a"/><rect x="6" y="1" width="2" height="1" fill="#8a8a8a"/><rect x="11" y="1" width="5" height="1" fill="#8a8a8a"/><rect x="1" y="2" width="7" height="1" fill="#8a8a8a"/><rect x="10" y="2" width="3" height="1" fill="#8a8a8a"/><rect x="14" y="2" width="2" height="1" fill="#8a8a8a"/><rect x="0" y="3" width="13" height="1" fill="#8a8a8a"/><rect x="15" y="3" width="1" height="1" fill="#8a8a8a"/><rect x="0" y="4" width="13" height="1" fill="#8a8a8a"/><rect x="0" y="5" width="13" height="1" fill="#8a8a8a"/><rect x="0" y="6" width="13" height="1" fill="#8a8a8a"/><rect x="0" y="7" width="13" height="1" fill="#8a8a8a"/><rect x="0" y="8" width="13" height="1" fill="#8a8a8a"/><rect x="0" y="9" width="5" height="1" fill="#8a8a8a"/><rect x="7" y="9" width="5" height="1" fill="#8a8a8a"/><rect x="4" y="2" width="2" height="1" fill="#b8b8b8"/><rect x="1" y="5" width="3" height="3" fill="#b8b8b8"/><rect x="5" y="5" width="1" height="3" fill="#b8b8b8"/><rect x="7" y="5" width="3" height="3" fill="#b8b8b8"/></svg>
<div class="t" style="position:absolute;left:64px;top:320px;font:11px/16px 'Liberation Sans', sans-serif;color:#6d6d6d;white-space:pre;">Product Sales for 1997</div>
<div style="position:absolute;left:33px;top:344px;width:11px;height:1px;background:repeating-linear-gradient(to right,#a0a0a0 0,#a0a0a0 1px,transparent 1px,transparent 2px);"></div>
<svg style="position:absolute;left:44px;top:339px" width="17" height="10" viewBox="0 0 17 10" shape-rendering="crispEdges"><rect x="3" y="0" width="5" height="1" fill="#8a8a8a"/><rect x="12" y="0" width="4" height="1" fill="#8a8a8a"/><rect x="2" y="1" width="2" height="1" fill="#8a8a8a"/><rect x="6" y="1" width="2" height="1" fill="#8a8a8a"/><rect x="11" y="1" width="5" height="1" fill="#8a8a8a"/><rect x="1" y="2" width="7" height="1" fill="#8a8a8a"/><rect x="10" y="2" width="3" height="1" fill="#8a8a8a"/><rect x="14" y="2" width="2" height="1" fill="#8a8a8a"/><rect x="0" y="3" width="13" height="1" fill="#8a8a8a"/><rect x="15" y="3" width="1" height="1" fill="#8a8a8a"/><rect x="0" y="4" width="13" height="1" fill="#8a8a8a"/><rect x="0" y="5" width="13" height="1" fill="#8a8a8a"/><rect x="0" y="6" width="13" height="1" fill="#8a8a8a"/><rect x="0" y="7" width="13" height="1" fill="#8a8a8a"/><rect x="0" y="8" width="13" height="1" fill="#8a8a8a"/><rect x="0" y="9" width="5" height="1" fill="#8a8a8a"/><rect x="7" y="9" width="5" height="1" fill="#8a8a8a"/><rect x="4" y="2" width="2" height="1" fill="#b8b8b8"/><rect x="1" y="5" width="3" height="3" fill="#b8b8b8"/><rect x="5" y="5" width="1" height="3" fill="#b8b8b8"/><rect x="7" y="5" width="3" height="3" fill="#b8b8b8"/></svg>
<div class="t" style="position:absolute;left:64px;top:336px;font:11px/16px 'Liberation Sans', sans-serif;color:#6d6d6d;white-space:pre;">Products by Category</div>
<div style="position:absolute;left:33px;top:360px;width:11px;height:1px;background:repeating-linear-gradient(to right,#a0a0a0 0,#a0a0a0 1px,transparent 1px,transparent 2px);"></div>
<svg style="position:absolute;left:44px;top:355px" width="17" height="10" viewBox="0 0 17 10" shape-rendering="crispEdges"><rect x="3" y="0" width="5" height="1" fill="#8a8a8a"/><rect x="12" y="0" width="4" height="1" fill="#8a8a8a"/><rect x="2" y="1" width="2" height="1" fill="#8a8a8a"/><rect x="6" y="1" width="2" height="1" fill="#8a8a8a"/><rect x="11" y="1" width="5" height="1" fill="#8a8a8a"/><rect x="1" y="2" width="7" height="1" fill="#8a8a8a"/><rect x="10" y="2" width="3" height="1" fill="#8a8a8a"/><rect x="14" y="2" width="2" height="1" fill="#8a8a8a"/><rect x="0" y="3" width="13" height="1" fill="#8a8a8a"/><rect x="15" y="3" width="1" height="1" fill="#8a8a8a"/><rect x="0" y="4" width="13" height="1" fill="#8a8a8a"/><rect x="0" y="5" width="13" height="1" fill="#8a8a8a"/><rect x="0" y="6" width="13" height="1" fill="#8a8a8a"/><rect x="0" y="7" width="13" height="1" fill="#8a8a8a"/><rect x="0" y="8" width="13" height="1" fill="#8a8a8a"/><rect x="0" y="9" width="5" height="1" fill="#8a8a8a"/><rect x="7" y="9" width="5" height="1" fill="#8a8a8a"/><rect x="4" y="2" width="2" height="1" fill="#b8b8b8"/><rect x="1" y="5" width="3" height="3" fill="#b8b8b8"/><rect x="5" y="5" width="1" height="3" fill="#b8b8b8"/><rect x="7" y="5" width="3" height="3" fill="#b8b8b8"/></svg>
<div class="t" style="position:absolute;left:64px;top:352px;font:11px/16px 'Liberation Sans', sans-serif;color:#6d6d6d;white-space:pre;">Quarterly Orders</div>
<div style="position:absolute;left:33px;top:376px;width:11px;height:1px;background:repeating-linear-gradient(to right,#a0a0a0 0,#a0a0a0 1px,transparent 1px,transparent 2px);"></div>
<svg style="position:absolute;left:44px;top:371px" width="17" height="10" viewBox="0 0 17 10" shape-rendering="crispEdges"><rect x="3" y="0" width="5" height="1" fill="#8a8a8a"/><rect x="12" y="0" width="4" height="1" fill="#8a8a8a"/><rect x="2" y="1" width="2" height="1" fill="#8a8a8a"/><rect x="6" y="1" width="2" height="1" fill="#8a8a8a"/><rect x="11" y="1" width="5" height="1" fill="#8a8a8a"/><rect x="1" y="2" width="7" height="1" fill="#8a8a8a"/><rect x="10" y="2" width="3" height="1" fill="#8a8a8a"/><rect x="14" y="2" width="2" height="1" fill="#8a8a8a"/><rect x="0" y="3" width="13" height="1" fill="#8a8a8a"/><rect x="15" y="3" width="1" height="1" fill="#8a8a8a"/><rect x="0" y="4" width="13" height="1" fill="#8a8a8a"/><rect x="0" y="5" width="13" height="1" fill="#8a8a8a"/><rect x="0" y="6" width="13" height="1" fill="#8a8a8a"/><rect x="0" y="7" width="13" height="1" fill="#8a8a8a"/><rect x="0" y="8" width="13" height="1" fill="#8a8a8a"/><rect x="0" y="9" width="5" height="1" fill="#8a8a8a"/><rect x="7" y="9" width="5" height="1" fill="#8a8a8a"/><rect x="4" y="2" width="2" height="1" fill="#b8b8b8"/><rect x="1" y="5" width="3" height="3" fill="#b8b8b8"/><rect x="5" y="5" width="1" height="3" fill="#b8b8b8"/><rect x="7" y="5" width="3" height="3" fill="#b8b8b8"/></svg>
<div class="t" style="position:absolute;left:64px;top:368px;font:11px/16px 'Liberation Sans', sans-serif;color:#6d6d6d;white-space:pre;">Sales by Category</div>
<div style="position:absolute;left:33px;top:392px;width:11px;height:1px;background:repeating-linear-gradient(to right,#a0a0a0 0,#a0a0a0 1px,transparent 1px,transparent 2px);"></div>
<svg style="position:absolute;left:44px;top:387px" width="17" height="10" viewBox="0 0 17 10" shape-rendering="crispEdges"><rect x="3" y="0" width="5" height="1" fill="#8a8a8a"/><rect x="12" y="0" width="4" height="1" fill="#8a8a8a"/><rect x="2" y="1" width="2" height="1" fill="#8a8a8a"/><rect x="6" y="1" width="2" height="1" fill="#8a8a8a"/><rect x="11" y="1" width="5" height="1" fill="#8a8a8a"/><rect x="1" y="2" width="7" height="1" fill="#8a8a8a"/><rect x="10" y="2" width="3" height="1" fill="#8a8a8a"/><rect x="14" y="2" width="2" height="1" fill="#8a8a8a"/><rect x="0" y="3" width="13" height="1" fill="#8a8a8a"/><rect x="15" y="3" width="1" height="1" fill="#8a8a8a"/><rect x="0" y="4" width="13" height="1" fill="#8a8a8a"/><rect x="0" y="5" width="13" height="1" fill="#8a8a8a"/><rect x="0" y="6" width="13" height="1" fill="#8a8a8a"/><rect x="0" y="7" width="13" height="1" fill="#8a8a8a"/><rect x="0" y="8" width="13" height="1" fill="#8a8a8a"/><rect x="0" y="9" width="5" height="1" fill="#8a8a8a"/><rect x="7" y="9" width="5" height="1" fill="#8a8a8a"/><rect x="4" y="2" width="2" height="1" fill="#b8b8b8"/><rect x="1" y="5" width="3" height="3" fill="#b8b8b8"/><rect x="5" y="5" width="1" height="3" fill="#b8b8b8"/><rect x="7" y="5" width="3" height="3" fill="#b8b8b8"/></svg>
<div class="t" style="position:absolute;left:64px;top:384px;font:11px/16px 'Liberation Sans', sans-serif;color:#6d6d6d;white-space:pre;">Sales Totals by Amount</div>
<div style="position:absolute;left:33px;top:408px;width:11px;height:1px;background:repeating-linear-gradient(to right,#a0a0a0 0,#a0a0a0 1px,transparent 1px,transparent 2px);"></div>
<svg style="position:absolute;left:44px;top:403px" width="17" height="10" viewBox="0 0 17 10" shape-rendering="crispEdges"><rect x="3" y="0" width="5" height="1" fill="#8a8a8a"/><rect x="12" y="0" width="4" height="1" fill="#8a8a8a"/><rect x="2" y="1" width="2" height="1" fill="#8a8a8a"/><rect x="6" y="1" width="2" height="1" fill="#8a8a8a"/><rect x="11" y="1" width="5" height="1" fill="#8a8a8a"/><rect x="1" y="2" width="7" height="1" fill="#8a8a8a"/><rect x="10" y="2" width="3" height="1" fill="#8a8a8a"/><rect x="14" y="2" width="2" height="1" fill="#8a8a8a"/><rect x="0" y="3" width="13" height="1" fill="#8a8a8a"/><rect x="15" y="3" width="1" height="1" fill="#8a8a8a"/><rect x="0" y="4" width="13" height="1" fill="#8a8a8a"/><rect x="0" y="5" width="13" height="1" fill="#8a8a8a"/><rect x="0" y="6" width="13" height="1" fill="#8a8a8a"/><rect x="0" y="7" width="13" height="1" fill="#8a8a8a"/><rect x="0" y="8" width="13" height="1" fill="#8a8a8a"/><rect x="0" y="9" width="5" height="1" fill="#8a8a8a"/><rect x="7" y="9" width="5" height="1" fill="#8a8a8a"/><rect x="4" y="2" width="2" height="1" fill="#b8b8b8"/><rect x="1" y="5" width="3" height="3" fill="#b8b8b8"/><rect x="5" y="5" width="1" height="3" fill="#b8b8b8"/><rect x="7" y="5" width="3" height="3" fill="#b8b8b8"/></svg>
<div class="t" style="position:absolute;left:64px;top:400px;font:11px/16px 'Liberation Sans', sans-serif;color:#6d6d6d;white-space:pre;">Summary of Sales by Quarter</div>
<div style="position:absolute;left:33px;top:424px;width:11px;height:1px;background:repeating-linear-gradient(to right,#a0a0a0 0,#a0a0a0 1px,transparent 1px,transparent 2px);"></div>
<svg style="position:absolute;left:44px;top:419px" width="17" height="10" viewBox="0 0 17 10" shape-rendering="crispEdges"><rect x="3" y="0" width="5" height="1" fill="#8a8a8a"/><rect x="12" y="0" width="4" height="1" fill="#8a8a8a"/><rect x="2" y="1" width="2" height="1" fill="#8a8a8a"/><rect x="6" y="1" width="2" height="1" fill="#8a8a8a"/><rect x="11" y="1" width="5" height="1" fill="#8a8a8a"/><rect x="1" y="2" width="7" height="1" fill="#8a8a8a"/><rect x="10" y="2" width="3" height="1" fill="#8a8a8a"/><rect x="14" y="2" width="2" height="1" fill="#8a8a8a"/><rect x="0" y="3" width="13" height="1" fill="#8a8a8a"/><rect x="15" y="3" width="1" height="1" fill="#8a8a8a"/><rect x="0" y="4" width="13" height="1" fill="#8a8a8a"/><rect x="0" y="5" width="13" height="1" fill="#8a8a8a"/><rect x="0" y="6" width="13" height="1" fill="#8a8a8a"/><rect x="0" y="7" width="13" height="1" fill="#8a8a8a"/><rect x="0" y="8" width="13" height="1" fill="#8a8a8a"/><rect x="0" y="9" width="5" height="1" fill="#8a8a8a"/><rect x="7" y="9" width="5" height="1" fill="#8a8a8a"/><rect x="4" y="2" width="2" height="1" fill="#b8b8b8"/><rect x="1" y="5" width="3" height="3" fill="#b8b8b8"/><rect x="5" y="5" width="1" height="3" fill="#b8b8b8"/><rect x="7" y="5" width="3" height="3" fill="#b8b8b8"/></svg>
<div class="t" style="position:absolute;left:64px;top:416px;font:11px/16px 'Liberation Sans', sans-serif;color:#6d6d6d;white-space:pre;">Summary of Sales by Year</div>
<div style="position:absolute;left:33px;top:440px;width:11px;height:1px;background:repeating-linear-gradient(to right,#a0a0a0 0,#a0a0a0 1px,transparent 1px,transparent 2px);"></div>
<svg style="position:absolute;left:44px;top:435px" width="17" height="10" viewBox="0 0 17 10" shape-rendering="crispEdges"><rect x="3" y="0" width="5" height="1" fill="#8a8a8a"/><rect x="12" y="0" width="4" height="1" fill="#8a8a8a"/><rect x="2" y="1" width="2" height="1" fill="#8a8a8a"/><rect x="6" y="1" width="2" height="1" fill="#8a8a8a"/><rect x="11" y="1" width="5" height="1" fill="#8a8a8a"/><rect x="1" y="2" width="7" height="1" fill="#8a8a8a"/><rect x="10" y="2" width="3" height="1" fill="#8a8a8a"/><rect x="14" y="2" width="2" height="1" fill="#8a8a8a"/><rect x="0" y="3" width="13" height="1" fill="#8a8a8a"/><rect x="15" y="3" width="1" height="1" fill="#8a8a8a"/><rect x="0" y="4" width="13" height="1" fill="#8a8a8a"/><rect x="0" y="5" width="13" height="1" fill="#8a8a8a"/><rect x="0" y="6" width="13" height="1" fill="#8a8a8a"/><rect x="0" y="7" width="13" height="1" fill="#8a8a8a"/><rect x="0" y="8" width="13" height="1" fill="#8a8a8a"/><rect x="0" y="9" width="5" height="1" fill="#8a8a8a"/><rect x="7" y="9" width="5" height="1" fill="#8a8a8a"/><rect x="4" y="2" width="2" height="1" fill="#b8b8b8"/><rect x="1" y="5" width="3" height="3" fill="#b8b8b8"/><rect x="5" y="5" width="1" height="3" fill="#b8b8b8"/><rect x="7" y="5" width="3" height="3" fill="#b8b8b8"/></svg>
<div class="t" style="position:absolute;left:64px;top:432px;font:11px/16px 'Liberation Sans', sans-serif;color:#6d6d6d;white-space:pre;">sysconstraints</div>
<div style="position:absolute;left:33px;top:456px;width:11px;height:1px;background:repeating-linear-gradient(to right,#a0a0a0 0,#a0a0a0 1px,transparent 1px,transparent 2px);"></div>
<svg style="position:absolute;left:44px;top:451px" width="17" height="10" viewBox="0 0 17 10" shape-rendering="crispEdges"><rect x="3" y="0" width="5" height="1" fill="#8a8a8a"/><rect x="12" y="0" width="4" height="1" fill="#8a8a8a"/><rect x="2" y="1" width="2" height="1" fill="#8a8a8a"/><rect x="6" y="1" width="2" height="1" fill="#8a8a8a"/><rect x="11" y="1" width="5" height="1" fill="#8a8a8a"/><rect x="1" y="2" width="7" height="1" fill="#8a8a8a"/><rect x="10" y="2" width="3" height="1" fill="#8a8a8a"/><rect x="14" y="2" width="2" height="1" fill="#8a8a8a"/><rect x="0" y="3" width="13" height="1" fill="#8a8a8a"/><rect x="15" y="3" width="1" height="1" fill="#8a8a8a"/><rect x="0" y="4" width="13" height="1" fill="#8a8a8a"/><rect x="0" y="5" width="13" height="1" fill="#8a8a8a"/><rect x="0" y="6" width="13" height="1" fill="#8a8a8a"/><rect x="0" y="7" width="13" height="1" fill="#8a8a8a"/><rect x="0" y="8" width="13" height="1" fill="#8a8a8a"/><rect x="0" y="9" width="5" height="1" fill="#8a8a8a"/><rect x="7" y="9" width="5" height="1" fill="#8a8a8a"/><rect x="4" y="2" width="2" height="1" fill="#b8b8b8"/><rect x="1" y="5" width="3" height="3" fill="#b8b8b8"/><rect x="5" y="5" width="1" height="3" fill="#b8b8b8"/><rect x="7" y="5" width="3" height="3" fill="#b8b8b8"/></svg>
<div class="t" style="position:absolute;left:64px;top:448px;font:11px/16px 'Liberation Sans', sans-serif;color:#6d6d6d;white-space:pre;">syssegments</div>
<svg style="position:absolute;left:9px;top:468px" width="9" height="9" viewBox="0 0 9 9" shape-rendering="crispEdges"><rect x="1" y="1" width="7" height="4" fill="#fbfbfb"/><rect x="1" y="5" width="7" height="3" fill="#e6e6e6"/><rect x="0.5" y="0.5" width="8" height="8" rx="1.2" fill="none" stroke="#979797" shape-rendering="geometricPrecision"/><rect x="2" y="4" width="5" height="1" fill="#3d5ea8"/></svg>
<div style="position:absolute;left:19px;top:472px;width:5px;height:1px;background:repeating-linear-gradient(to right,#a0a0a0 0,#a0a0a0 1px,transparent 1px,transparent 2px);"></div>
<div class="t" style="position:absolute;left:25px;top:464px;font:11px/16px 'Liberation Sans', sans-serif;color:#000;white-space:pre;">Relationships</div>
<div style="position:absolute;left:32px;top:478px;width:1px;height:78px;background:repeating-linear-gradient(to bottom,#a0a0a0 0,#a0a0a0 1px,transparent 1px,transparent 2px);"></div>
<div style="position:absolute;left:33px;top:488px;width:11px;height:1px;background:repeating-linear-gradient(to right,#a0a0a0 0,#a0a0a0 1px,transparent 1px,transparent 2px);"></div>
<svg style="position:absolute;left:45px;top:482px" width="14" height="12" viewBox="0 0 14 12" shape-rendering="crispEdges"><defs><linearGradient id="rg" x1="0" y1="0" x2="0" y2="1"><stop offset="0" stop-color="#fff3c0"/><stop offset="1" stop-color="#f5c860"/></linearGradient></defs><rect x="8.5" y="0.5" width="5" height="4" fill="url(#rg)" stroke="#c0832a"/><rect x="0.5" y="7.5" width="5" height="4" fill="url(#rg)" stroke="#c0832a"/><path d="M6 9.5H10.5V5" fill="none" stroke="#222"/></svg>
<div class="t" style="position:absolute;left:63px;top:480px;font:11px/16px 'Liberation Sans', sans-serif;color:#000;white-space:pre;">demofk [tDemo2 - tDemo]</div>
<div style="position:absolute;left:33px;top:504px;width:11px;height:1px;background:repeating-linear-gradient(to right,#a0a0a0 0,#a0a0a0 1px,transparent 1px,transparent 2px);"></div>
<svg style="position:absolute;left:45px;top:498px" width="14" height="12" viewBox="0 0 14 12" shape-rendering="crispEdges"><defs><linearGradient id="rg" x1="0" y1="0" x2="0" y2="1"><stop offset="0" stop-color="#fff3c0"/><stop offset="1" stop-color="#f5c860"/></linearGradient></defs><rect x="8.5" y="0.5" width="5" height="4" fill="url(#rg)" stroke="#c0832a"/><rect x="0.5" y="7.5" width="5" height="4" fill="url(#rg)" stroke="#c0832a"/><path d="M6 9.5H10.5V5" fill="none" stroke="#222"/></svg>
<div class="t" style="position:absolute;left:63px;top:496px;font:11px/16px 'Liberation Sans', sans-serif;color:#000;white-space:pre;">FK_CustomerCustomerDemo</div>
<div style="position:absolute;left:33px;top:520px;width:11px;height:1px;background:repeating-linear-gradient(to right,#a0a0a0 0,#a0a0a0 1px,transparent 1px,transparent 2px);"></div>
<svg style="position:absolute;left:45px;top:514px" width="14" height="12" viewBox="0 0 14 12" shape-rendering="crispEdges"><defs><linearGradient id="rg" x1="0" y1="0" x2="0" y2="1"><stop offset="0" stop-color="#fff3c0"/><stop offset="1" stop-color="#f5c860"/></linearGradient></defs><rect x="8.5" y="0.5" width="5" height="4" fill="url(#rg)" stroke="#c0832a"/><rect x="0.5" y="7.5" width="5" height="4" fill="url(#rg)" stroke="#c0832a"/><path d="M6 9.5H10.5V5" fill="none" stroke="#222"/></svg>
<div class="t" style="position:absolute;left:63px;top:512px;font:11px/16px 'Liberation Sans', sans-serif;color:#000;white-space:pre;">FK_CustomerCustomerDemo</div>
<div style="position:absolute;left:33px;top:536px;width:11px;height:1px;background:repeating-linear-gradient(to right,#a0a0a0 0,#a0a0a0 1px,transparent 1px,transparent 2px);"></div>
<svg style="position:absolute;left:45px;top:530px" width="14" height="12" viewBox="0 0 14 12" shape-rendering="crispEdges"><defs><linearGradient id="rg" x1="0" y1="0" x2="0" y2="1"><stop offset="0" stop-color="#fff3c0"/><stop offset="1" stop-color="#f5c860"/></linearGradient></defs><rect x="8.5" y="0.5" width="5" height="4" fill="url(#rg)" stroke="#c0832a"/><rect x="0.5" y="7.5" width="5" height="4" fill="url(#rg)" stroke="#c0832a"/><path d="M6 9.5H10.5V5" fill="none" stroke="#222"/></svg>
<div class="t" style="position:absolute;left:63px;top:528px;font:11px/16px 'Liberation Sans', sans-serif;color:#000;white-space:pre;">FK_E2_EID [EMPL1 - EMPL2]</div>
<div style="position:absolute;left:33px;top:552px;width:11px;height:1px;background:repeating-linear-gradient(to right,#a0a0a0 0,#a0a0a0 1px,transparent 1px,transparent 2px);"></div>
<svg style="position:absolute;left:45px;top:546px" width="14" height="12" viewBox="0 0 14 12" shape-rendering="crispEdges"><defs><linearGradient id="rg" x1="0" y1="0" x2="0" y2="1"><stop offset="0" stop-color="#fff3c0"/><stop offset="1" stop-color="#f5c860"/></linearGradient></defs><rect x="8.5" y="0.5" width="5" height="4" fill="url(#rg)" stroke="#c0832a"/><rect x="0.5" y="7.5" width="5" height="4" fill="url(#rg)" stroke="#c0832a"/><path d="M6 9.5H10.5V5" fill="none" stroke="#222"/></svg>
<div class="t" style="position:absolute;left:63px;top:544px;font:11px/16px 'Liberation Sans', sans-serif;color:#000;white-space:pre;">FK_Employees_Employees</div>
</div>
<div style="position:absolute;left:192px;top:102px;width:16px;height:556px;background:#f0f0f0;"></div>
<div style="position:absolute;left:192px;top:270px;width:15px;height:271px;background:#cdcdcd;"></div>
<svg style="position:absolute;left:196px;top:107px;" width="8" height="8" viewBox="0 0 8 8" shape-rendering="crispEdges"><path d="M0.8 5.8 L3.5 1.8 L6.2 5.8" fill="none" stroke="#606060" stroke-width="1.9" shape-rendering="geometricPrecision"/></svg>
<svg style="position:absolute;left:196px;top:645px;" width="8" height="8" viewBox="0 0 8 8" shape-rendering="crispEdges"><path d="M0.8 1.8 L3.5 5.8 L6.2 1.8" fill="none" stroke="#606060" stroke-width="1.9" shape-rendering="geometricPrecision"/></svg>
<div style="position:absolute;left:10px;top:658px;width:198px;height:16px;background:#f0f0f0;"></div>
<div style="position:absolute;left:27px;top:658px;width:57px;height:15px;background:#cdcdcd;"></div>
<svg style="position:absolute;left:14px;top:661px;" width="8" height="8" viewBox="0 0 8 8" shape-rendering="crispEdges"><path d="M5.8 0.8 L1.8 3.5 L5.8 6.2" fill="none" stroke="#606060" stroke-width="1.9" shape-rendering="geometricPrecision"/></svg>
<svg style="position:absolute;left:179px;top:661px;" width="8" height="8" viewBox="0 0 8 8" shape-rendering="crispEdges"><path d="M1.8 0.8 L5.8 3.5 L1.8 6.2" fill="none" stroke="#606060" stroke-width="1.9" shape-rendering="geometricPrecision"/></svg>
<div style="position:absolute;left:221px;top:83px;width:129px;height:19px;background:#e3e3e3;border:1px solid #acacac;border-bottom:none;"></div>
<div style="position:absolute;left:226px;top:84px;font:bold 11px/16px 'Liberation Sans', sans-serif;color:#000;white-space:pre;font-size:11.8px;">SQL Server 2000 - 54</div>
<div style="position:absolute;left:349px;top:85px;width:1px;height:16px;background:#acacac;"></div>
<div class="t" style="position:absolute;left:355px;top:84px;font:normal 11px/16px 'Liberation Sans', sans-serif;color:#000;white-space:pre;">Views - Northwind</div>
<div style="position:absolute;left:445px;top:85px;width:1px;height:16px;background:#acacac;"></div>
<svg style="position:absolute;left:738px;top:87px;" width="7" height="10" viewBox="0 0 7 10" shape-rendering="crispEdges"><path d="M5.5 0.8 L1 4.75 L5.5 8.7 Z" fill="none" stroke="#000" stroke-width="1.1" shape-rendering="geometricPrecision"/></svg>
<svg style="position:absolute;left:755px;top:87px;" width="7" height="10" viewBox="0 0 7 10" shape-rendering="crispEdges"><path d="M1.5 0.8 L6 4.75 L1.5 8.7 Z" fill="none" stroke="#000" stroke-width="1.1" shape-rendering="geometricPrecision"/></svg>
<svg style="position:absolute;left:770px;top:87px;" width="9" height="10" viewBox="0 0 9 10" shape-rendering="crispEdges"><rect x="0.5" y="0.5" width="8" height="9" fill="none" stroke="#000"/><rect x="2" y="2" width="5" height="1" fill="#000"/><rect x="2" y="4" width="5" height="1" fill="#000"/><rect x="2" y="6" width="5" height="1" fill="#000"/></svg>
<div style="position:absolute;left:213px;top:101px;width:574px;height:462px;border:1px solid #a0a0a0;background:#f0f0f0;"></div>
<div style="position:absolute;left:215px;top:103px;width:570px;height:458px;border:1px solid #828790;background:#f0f0f0;"></div>
<div style="position:absolute;left:216px;top:104px;width:551px;height:440px;overflow:hidden;background:#fff;">
<div style="position:absolute;left:378px;top:-8px;width:400px;height:500px;background:#ffd9d9;border-left:1px solid #c9a9a9;"></div>
<div style="position:absolute;left:71px;top:-24px;width:160px;height:26px;background:#ffffcc;border:1px solid #000;"></div>
<div style="position:absolute;left:-36px;top:33px;width:82px;height:90px;background:#ffffcc;border:1px solid #000;"></div>
<div style="position:absolute;left:-36px;top:50px;width:82px;height:1px;background:#000;"></div>
<div class="t" style="position:absolute;left:-59px;top:68px;font:normal 11px/16px 'Liberation Sans', sans-serif;color:#000;white-space:pre;">City : nvarchar (15)</div>
<div style="position:absolute;left:-36px;top:135px;width:147px;height:81px;background:#ffffcc;border:1px solid #000;"></div>
<div style="position:absolute;left:-36px;top:152px;width:147px;height:1px;background:#000;"></div>
<div style="position:absolute;left:12px;top:136px;font:bold 11px/16px 'Liberation Sans', sans-serif;color:#000;white-space:pre;">andy</div>
<div class="t" style="position:absolute;left:-19px;top:153px;font:normal 11px/16px 'Liberation Sans', sans-serif;color:#000;white-space:pre;">col1 : varchar (25)</div>
<div class="t" style="position:absolute;left:-19px;top:170px;font:normal 11px/16px 'Liberation Sans', sans-serif;color:#000;white-space:pre;">col2 : varchar (25)</div>
<div style="position:absolute;left:401px;top:-44px;width:200px;height:151px;background:#ffffcc;border:1px solid #000;"></div>
<div class="t" style="position:absolute;left:422px;top:-12px;font:normal 11px/16px 'Liberation Sans', sans-serif;color:#000;white-space:pre;">City : nvarchar (15)</div>
<div class="t" style="position:absolute;left:422px;top:4px;font:normal 11px/16px 'Liberation Sans', sans-serif;color:#000;white-space:pre;">Region : nvarchar (15)</div>
<div class="t" style="position:absolute;left:422px;top:21px;font:normal 11px/16px 'Liberation Sans', sans-serif;color:#000;white-space:pre;">PostalCode : nvarchar (10)</div>
<div class="t" style="position:absolute;left:422px;top:38px;font:normal 11px/16px 'Liberation Sans', sans-serif;color:#000;white-space:pre;">Country : nvarchar (15)</div>
<div class="t" style="position:absolute;left:422px;top:55px;font:normal 11px/16px 'Liberation Sans', sans-serif;color:#000;white-space:pre;">Phone : nvarchar (24)</div>
<div class="t" style="position:absolute;left:422px;top:72px;font:normal 11px/16px 'Liberation Sans', sans-serif;color:#000;white-space:pre;">Fax : nvarchar (24)</div>
<div class="t" style="position:absolute;left:422px;top:89px;font:normal 11px/16px 'Liberation Sans', sans-serif;color:#000;white-space:pre;">LongVarchar : varchar (2020)</div>
<svg style="position:absolute;left:410px;top:6px" width="5" height="11" viewBox="0 0 5 11" shape-rendering="crispEdges"><rect x="0" y="0" width="5" height="1" fill="#1b3f8b"/><rect x="1" y="1" width="3" height="1" fill="#1b3f8b"/><rect x="0" y="2" width="5" height="9" fill="#7d7d7d"/><rect x="1" y="3" width="3" height="3" fill="#fff"/><rect x="1" y="7" width="3" height="3" fill="#fff"/><rect x="2" y="2" width="1" height="1" fill="#1b3f8b"/><rect x="2" y="4" width="1" height="1" fill="#1b3f8b"/><rect x="2" y="8" width="1" height="1" fill="#1b3f8b"/></svg>
<svg style="position:absolute;left:410px;top:23px" width="5" height="11" viewBox="0 0 5 11" shape-rendering="crispEdges"><rect x="0" y="0" width="5" height="1" fill="#1b3f8b"/><rect x="1" y="1" width="3" height="1" fill="#1b3f8b"/><rect x="0" y="2" width="5" height="9" fill="#7d7d7d"/><rect x="1" y="3" width="3" height="3" fill="#fff"/><rect x="1" y="7" width="3" height="3" fill="#fff"/><rect x="2" y="2" width="1" height="1" fill="#1b3f8b"/><rect x="2" y="4" width="1" height="1" fill="#1b3f8b"/><rect x="2" y="8" width="1" height="1" fill="#1b3f8b"/></svg>
<div style="position:absolute;left:401px;top:106px;width:200px;height:38px;background:#fff;border:1px solid #000;"></div>
<div class="t" style="position:absolute;left:404px;top:107px;font:normal 11px/16px 'Liberation Sans', sans-serif;color:#000;white-space:pre;">This is comment is for the table</div>
<div class="t" style="position:absolute;left:404px;top:121px;font:normal 11px/16px 'Liberation Sans', sans-serif;color:#000;white-space:pre;">customers</div>
<div style="position:absolute;left:486px;top:169px;width:120px;height:70px;background:#ffffcc;border:1px solid #000;"></div>
<div style="position:absolute;left:486px;top:186px;width:120px;height:1px;background:#000;"></div>
<svg style="position:absolute;left:491px;top:191px" width="11" height="7" viewBox="0 0 11 7" shape-rendering="crispEdges"><g fill="#b8803a"><rect x="1" y="0" width="3" height="1"/><rect x="0" y="1" width="5" height="5"/><rect x="1" y="6" width="3" height="1"/><rect x="5" y="2" width="5" height="3"/><rect x="10" y="3" width="1" height="1"/><rect x="6" y="5" width="1" height="1"/><rect x="8" y="5" width="1" height="1"/></g><rect x="2" y="2" width="1" height="3" fill="#fbf3d8"/><rect x="5" y="3" width="4" height="1" fill="#d8b070"/></svg>
<div class="t" style="position:absolute;left:507px;top:187px;font:normal 11px/16px 'Liberation Sans', sans-serif;color:#000;white-space:pre;">TerritoryID : nvarchar (20)</div>
<div class="t" style="position:absolute;left:507px;top:204px;font:normal 11px/16px 'Liberation Sans', sans-serif;color:#000;white-space:pre;">TerritoryDescription : nchar (50)</div>
<div class="t" style="position:absolute;left:507px;top:221px;font:normal 11px/16px 'Liberation Sans', sans-serif;color:#000;white-space:pre;">RegionID : int</div>
<div class="t" style="position:absolute;left:440px;top:318px;font:normal 11px/16px 'Liberation Sans', sans-serif;color:#000;white-space:pre;font-size:10.7px;">FK_Territories_Region</div>
<svg style="position:absolute;left:504px;top:341px" width="50" height="60" viewBox="0 0 50 60" shape-rendering="crispEdges"><path d="M7 3.5H50" stroke="#222" stroke-dasharray="5 5"/><path d="M5.5 8V52" stroke="#222" stroke-dasharray="5 5"/><path d="M1 51.5H11" stroke="#111"/><path d="M2 56.5 L5.5 52 L9.5 56.5" fill="none" stroke="#111" shape-rendering="geometricPrecision"/></svg>
<div style="position:absolute;left:403px;top:397px;width:200px;height:60px;background:#ffffcc;border:1px solid #000;"></div>
<div style="position:absolute;left:403px;top:414px;width:200px;height:1px;background:#000;"></div>
<div style="position:absolute;left:474px;top:398px;font:bold 11px/16px 'Liberation Sans', sans-serif;color:#000;white-space:pre;">Region</div>
<svg style="position:absolute;left:408px;top:419px" width="11" height="7" viewBox="0 0 11 7" shape-rendering="crispEdges"><g fill="#b8803a"><rect x="1" y="0" width="3" height="1"/><rect x="0" y="1" width="5" height="5"/><rect x="1" y="6" width="3" height="1"/><rect x="5" y="2" width="5" height="3"/><rect x="10" y="3" width="1" height="1"/><rect x="6" y="5" width="1" height="1"/><rect x="8" y="5" width="1" height="1"/></g><rect x="2" y="2" width="1" height="3" fill="#fbf3d8"/><rect x="5" y="3" width="4" height="1" fill="#d8b070"/></svg>
<div class="t" style="position:absolute;left:424px;top:415px;font:normal 11px/16px 'Liberation Sans', sans-serif;color:#000;white-space:pre;">RegionID : int</div>
<div style="position:absolute;left:494px;top:413px;font:bold 11px/16px 'Liberation Sans', sans-serif;color:#d020d0;white-space:pre;">*</div>
<div class="t" style="position:absolute;left:424px;top:432px;font:normal 11px/16px 'Liberation Sans', sans-serif;color:#000;white-space:pre;">RegionDescription : nchar (50)</div>
</div>
<div style="position:absolute;left:767px;top:104px;width:17px;height:440px;background:#f0f0f0;"></div>
<div style="position:absolute;left:768px;top:346px;width:14px;height:162px;background:#cdcdcd;"></div>
<svg style="position:absolute;left:772px;top:109px;" width="8" height="8" viewBox="0 0 8 8" shape-rendering="crispEdges"><path d="M0.8 5.8 L3.5 1.8 L6.2 5.8" fill="none" stroke="#606060" stroke-width="1.9" shape-rendering="geometricPrecision"/></svg>
<svg style="position:absolute;left:772px;top:531px;" width="8" height="8" viewBox="0 0 8 8" shape-rendering="crispEdges"><path d="M0.8 1.8 L3.5 5.8 L6.2 1.8" fill="none" stroke="#606060" stroke-width="1.9" shape-rendering="geometricPrecision"/></svg>
<div style="position:absolute;left:216px;top:544px;width:568px;height:16px;background:#f0f0f0;"></div>
<div style="position:absolute;left:322px;top:545px;width:131px;height:14px;background:#cdcdcd;"></div>
<svg style="position:absolute;left:220px;top:547px;" width="8" height="8" viewBox="0 0 8 8" shape-rendering="crispEdges"><path d="M5.8 0.8 L1.8 3.5 L5.8 6.2" fill="none" stroke="#606060" stroke-width="1.9" shape-rendering="geometricPrecision"/></svg>
<svg style="position:absolute;left:755px;top:547px;" width="8" height="8" viewBox="0 0 8 8" shape-rendering="crispEdges"><path d="M1.8 0.8 L5.8 3.5 L1.8 6.2" fill="none" stroke="#606060" stroke-width="1.9" shape-rendering="geometricPrecision"/></svg>
<div style="position:absolute;left:213px;top:567px;width:574px;height:18px;border:1px solid #a0a0a0;border-radius:2px;background:#f0f0f0;"></div>
<svg style="position:absolute;left:218px;top:570px;" width="3" height="14" viewBox="0 0 3 14" shape-rendering="crispEdges"><rect x="0" y="0" width="3" height="1" fill="#c0c0c0"/><rect x="0" y="2" width="3" height="1" fill="#c0c0c0"/><rect x="0" y="4" width="3" height="1" fill="#c0c0c0"/><rect x="0" y="6" width="3" height="1" fill="#c0c0c0"/><rect x="0" y="8" width="3" height="1" fill="#c0c0c0"/><rect x="0" y="10" width="3" height="1" fill="#c0c0c0"/><rect x="0" y="12" width="3" height="1" fill="#c0c0c0"/></svg>
<div class="t" style="position:absolute;left:226px;top:569px;font:normal 11px/16px 'Liberation Sans', sans-serif;color:#000;white-space:pre;">Object Properties</div>
<svg style="position:absolute;left:764px;top:573px;" width="10" height="9" viewBox="0 0 10 9" shape-rendering="crispEdges"><path d="M3 0.5H9.5V6" fill="none" stroke="#000"/><rect x="0.5" y="3.5" width="6" height="5" fill="none" stroke="#000" stroke-width="1"/></svg>
<div style="position:absolute;left:213px;top:586px;width:574px;height:91px;background:#fff;border-bottom:1px solid #a0a0a0;"></div>
<div class="t" style="position:absolute;left:215px;top:589px;font:normal 11px/14px 'Liberation Sans', sans-serif;color:#000;white-space:pre;font-size:10.6px;">RDBMS: MS SQL Server 2000</div>
<div class="t" style="position:absolute;left:215px;top:603px;font:normal 11px/14px 'Liberation Sans', sans-serif;color:#000;white-space:pre;font-size:10.6px;">Tables: 28</div>
<div class="t" style="position:absolute;left:215px;top:617px;font:normal 11px/14px 'Liberation Sans', sans-serif;color:#000;white-space:pre;font-size:10.6px;">Views: 18</div>
<div class="t" style="position:absolute;left:215px;top:631px;font:normal 11px/14px 'Liberation Sans', sans-serif;color:#000;white-space:pre;font-size:10.6px;">Relationships: 16</div>
<div style="position:absolute;left:8px;top:676px;width:201px;height:1px;background:#a0a0a0;"></div>
<div class="t" style="position:absolute;left:12px;top:677px;font:normal 11px/16px 'Liberation Sans', sans-serif;color:#000;white-space:pre;">Selected Objects: 0</div>
<div style="position:absolute;left:791px;top:81px;width:200px;height:18px;border:1px solid #a0a0a0;border-radius:2px;background:#f0f0f0;"></div>
<svg style="position:absolute;left:796px;top:84px;" width="3" height="14" viewBox="0 0 3 14" shape-rendering="crispEdges"><rect x="0" y="0" width="3" height="1" fill="#c0c0c0"/><rect x="0" y="2" width="3" height="1" fill="#c0c0c0"/><rect x="0" y="4" width="3" height="1" fill="#c0c0c0"/><rect x="0" y="6" width="3" height="1" fill="#c0c0c0"/><rect x="0" y="8" width="3" height="1" fill="#c0c0c0"/><rect x="0" y="10" width="3" height="1" fill="#c0c0c0"/><rect x="0" y="12" width="3" height="1" fill="#c0c0c0"/></svg>
<div class="t" style="position:absolute;left:804px;top:83px;font:normal 11px/16px 'Liberation Sans', sans-serif;color:#000;white-space:pre;">Palette</div>
<svg style="position:absolute;left:968px;top:87px;" width="10" height="9" viewBox="0 0 10 9" shape-rendering="crispEdges"><path d="M3 0.5H9.5V6" fill="none" stroke="#000"/><rect x="0.5" y="3.5" width="6" height="5" fill="none" stroke="#000" stroke-width="1"/></svg>
<div style="position:absolute;left:791px;top:101px;width:200px;height:275px;border:1px solid #828790;background:#fff;"></div>
<div style="position:absolute;left:792px;top:102px;width:198px;height:23px;background:#f0f0f0;"></div>
<svg style="position:absolute;left:798px;top:109px;" width="9" height="9" viewBox="0 0 9 9" shape-rendering="crispEdges"><defs><linearGradient id="mg" x1="0" y1="0" x2="0" y2="1"><stop offset="0" stop-color="#fff"/><stop offset="1" stop-color="#e0e0e0"/></linearGradient></defs><rect x="0.5" y="0.5" width="8" height="8" rx="1" fill="url(#mg)" stroke="#979797" shape-rendering="geometricPrecision"/><rect x="2" y="4" width="5" height="1" fill="#3d5ea8"/></svg>
<div class="t" style="position:absolute;left:812px;top:105px;font:normal 11px/16px 'Liberation Sans', sans-serif;color:#000;white-space:pre;">Entities</div>
<svg style="position:absolute;left:797px;top:127px;" width="30" height="24" viewBox="0 0 30 24" shape-rendering="crispEdges"><rect x="0.5" y="0.5" width="29" height="23" fill="#ffffcc" stroke="#b8b8a8"/><rect x="0" y="0" width="30" height="4" fill="#cfcfcf"/><rect x="2" y="1" width="3" height="2" fill="#e0a030"/><rect x="7" y="1" width="13" height="2" fill="#333"/><rect x="27" y="1" width="2" height="2" fill="#999"/><rect x="2" y="6" width="2" height="2" fill="#e0a030"/><rect x="2" y="12" width="2" height="2" fill="#e0a030"/><rect x="6" y="7" width="1" height="1" fill="#222" opacity="0.6"/><rect x="7" y="7" width="1" height="1" fill="#222" opacity="0.6"/><rect x="10" y="7" width="1" height="1" fill="#222" opacity="0.6"/><rect x="11" y="7" width="1" height="1" fill="#222" opacity="0.6"/><rect x="13" y="7" width="1" height="1" fill="#222" opacity="0.6"/><rect x="6" y="10" width="1" height="1" fill="#222" opacity="0.6"/><rect x="7" y="10" width="1" height="1" fill="#222" opacity="0.6"/><rect x="9" y="10" width="1" height="1" fill="#222" opacity="0.6"/><rect x="10" y="10" width="1" height="1" fill="#222" opacity="0.6"/><rect x="12" y="10" width="1" height="1" fill="#222" opacity="0.6"/><rect x="13" y="10" width="1" height="1" fill="#222" opacity="0.6"/><rect x="15" y="10" width="1" height="1" fill="#222" opacity="0.6"/><rect x="16" y="10" width="1" height="1" fill="#222" opacity="0.6"/><rect x="6" y="13" width="1" height="1" fill="#222" opacity="0.6"/><rect x="7" y="13" width="1" height="1" fill="#222" opacity="0.6"/><rect x="9" y="13" width="1" height="1" fill="#222" opacity="0.6"/><rect x="10" y="13" width="1" height="1" fill="#222" opacity="0.6"/><rect x="12" y="13" width="1" height="1" fill="#222" opacity="0.6"/><rect x="13" y="13" width="1" height="1" fill="#222" opacity="0.6"/><rect x="16" y="13" width="1" height="1" fill="#222" opacity="0.6"/><rect x="17" y="13" width="1" height="1" fill="#222" opacity="0.6"/><rect x="19" y="13" width="1" height="1" fill="#222" opacity="0.6"/><rect x="20" y="13" width="1" height="1" fill="#222" opacity="0.6"/><rect x="22" y="13" width="1" height="1" fill="#222" opacity="0.6"/><rect x="23" y="13" width="1" height="1" fill="#222" opacity="0.6"/><rect x="25" y="13" width="1" height="1" fill="#222" opacity="0.6"/><rect x="6" y="16" width="1" height="1" fill="#222" opacity="0.6"/><rect x="7" y="16" width="1" height="1" fill="#222" opacity="0.6"/><rect x="9" y="16" width="1" height="1" fill="#222" opacity="0.6"/><rect x="11" y="16" width="1" height="1" fill="#222" opacity="0.6"/><rect x="12" y="16" width="1" height="1" fill="#222" opacity="0.6"/><rect x="14" y="16" width="1" height="1" fill="#222" opacity="0.6"/><rect x="16" y="16" width="1" height="1" fill="#222" opacity="0.6"/><rect x="17" y="16" width="1" height="1" fill="#222" opacity="0.6"/><rect x="19" y="16" width="1" height="1" fill="#222" opacity="0.6"/><rect x="20" y="16" width="1" height="1" fill="#222" opacity="0.6"/><rect x="22" y="16" width="1" height="1" fill="#222" opacity="0.6"/><rect x="23" y="16" width="1" height="1" fill="#222" opacity="0.6"/><rect x="6" y="19" width="1" height="1" fill="#222" opacity="0.6"/><rect x="7" y="19" width="1" height="1" fill="#222" opacity="0.6"/><rect x="9" y="19" width="1" height="1" fill="#222" opacity="0.6"/><rect x="12" y="19" width="1" height="1" fill="#222" opacity="0.6"/><rect x="13" y="19" width="1" height="1" fill="#222" opacity="0.6"/><rect x="15" y="19" width="1" height="1" fill="#222" opacity="0.6"/><rect x="16" y="19" width="1" height="1" fill="#222" opacity="0.6"/><rect x="6" y="22" width="1" height="1" fill="#222" opacity="0.6"/><rect x="7" y="22" width="1" height="1" fill="#222" opacity="0.6"/><rect x="9" y="22" width="1" height="1" fill="#222" opacity="0.6"/><rect x="10" y="22" width="1" height="1" fill="#222" opacity="0.6"/><rect x="12" y="22" width="1" height="1" fill="#222" opacity="0.6"/><rect x="14" y="22" width="1" height="1" fill="#222" opacity="0.6"/><rect x="15" y="22" width="1" height="1" fill="#222" opacity="0.6"/></svg>
<svg style="position:absolute;left:798px;top:157px;" width="28" height="24" viewBox="0 0 28 24" shape-rendering="crispEdges"><rect x="0.5" y="0.5" width="27" height="23" fill="#eeeeff" stroke="#b0b0b8"/><rect x="0" y="0" width="28" height="4" fill="#cfcfcf"/><rect x="2" y="1" width="3" height="2" fill="#a0b0d0"/><rect x="7" y="1" width="14" height="2" fill="#777"/><rect x="6" y="6" width="1" height="1" fill="#666" opacity="0.55"/><rect x="7" y="6" width="1" height="1" fill="#666" opacity="0.55"/><rect x="9" y="6" width="1" height="1" fill="#666" opacity="0.55"/><rect x="11" y="6" width="1" height="1" fill="#666" opacity="0.55"/><rect x="12" y="6" width="1" height="1" fill="#666" opacity="0.55"/><rect x="6" y="9" width="1" height="1" fill="#666" opacity="0.55"/><rect x="7" y="9" width="1" height="1" fill="#666" opacity="0.55"/><rect x="9" y="9" width="1" height="1" fill="#666" opacity="0.55"/><rect x="10" y="9" width="1" height="1" fill="#666" opacity="0.55"/><rect x="6" y="12" width="1" height="1" fill="#666" opacity="0.55"/><rect x="7" y="12" width="1" height="1" fill="#666" opacity="0.55"/><rect x="10" y="12" width="1" height="1" fill="#666" opacity="0.55"/><rect x="11" y="12" width="1" height="1" fill="#666" opacity="0.55"/><rect x="13" y="12" width="1" height="1" fill="#666" opacity="0.55"/><rect x="14" y="12" width="1" height="1" fill="#666" opacity="0.55"/><rect x="6" y="15" width="1" height="1" fill="#666" opacity="0.55"/><rect x="7" y="15" width="1" height="1" fill="#666" opacity="0.55"/><rect x="9" y="15" width="1" height="1" fill="#666" opacity="0.55"/><rect x="11" y="15" width="1" height="1" fill="#666" opacity="0.55"/><rect x="12" y="15" width="1" height="1" fill="#666" opacity="0.55"/><rect x="14" y="15" width="1" height="1" fill="#666" opacity="0.55"/><rect x="15" y="15" width="1" height="1" fill="#666" opacity="0.55"/><rect x="6" y="18" width="1" height="1" fill="#666" opacity="0.55"/><rect x="7" y="18" width="1" height="1" fill="#666" opacity="0.55"/><rect x="9" y="18" width="1" height="1" fill="#666" opacity="0.55"/><rect x="10" y="18" width="1" height="1" fill="#666" opacity="0.55"/><rect x="12" y="18" width="1" height="1" fill="#666" opacity="0.55"/><rect x="13" y="18" width="1" height="1" fill="#666" opacity="0.55"/><rect x="6" y="21" width="1" height="1" fill="#666" opacity="0.55"/><rect x="7" y="21" width="1" height="1" fill="#666" opacity="0.55"/><rect x="9" y="21" width="1" height="1" fill="#666" opacity="0.55"/><rect x="10" y="21" width="1" height="1" fill="#666" opacity="0.55"/><rect x="12" y="21" width="1" height="1" fill="#666" opacity="0.55"/><rect x="13" y="21" width="1" height="1" fill="#666" opacity="0.55"/><rect x="6" y="24" width="1" height="1" fill="#666" opacity="0.55"/><rect x="7" y="24" width="1" height="1" fill="#666" opacity="0.55"/><rect x="10" y="24" width="1" height="1" fill="#666" opacity="0.55"/><rect x="11" y="24" width="1" height="1" fill="#666" opacity="0.55"/><rect x="13" y="24" width="1" height="1" fill="#666" opacity="0.55"/></svg>
<svg style="position:absolute;left:798px;top:187px;" width="28" height="24" viewBox="0 0 28 24" shape-rendering="crispEdges"><rect x="0.5" y="0.5" width="27" height="23" fill="#fff" stroke="#a0a0a0"/><rect x="0" y="0" width="28" height="4" fill="#c8c8c8"/><rect x="2" y="1" width="3" height="2" fill="#999"/><rect x="7" y="1" width="14" height="2" fill="#777"/></svg>
<svg style="position:absolute;left:798px;top:217px;" width="28" height="24" viewBox="0 0 28 24" shape-rendering="crispEdges"><rect x="0.5" y="0.5" width="27" height="23" fill="#f0f0f0" stroke="#888"/><rect x="2" y="2" width="8" height="1" fill="#888"/></svg>
<div class="t" style="position:absolute;left:831px;top:131px;font:normal 11px/16px 'Liberation Sans', sans-serif;color:#000;white-space:pre;">Table</div>
<div class="t" style="position:absolute;left:831px;top:161px;font:normal 11px/16px 'Liberation Sans', sans-serif;color:#000;white-space:pre;">View</div>
<div class="t" style="position:absolute;left:831px;top:191px;font:normal 11px/16px 'Liberation Sans', sans-serif;color:#000;white-space:pre;">Note</div>
<div class="t" style="position:absolute;left:831px;top:221px;font:normal 11px/16px 'Liberation Sans', sans-serif;color:#000;white-space:pre;">Region</div>
<div style="position:absolute;left:792px;top:244px;width:198px;height:1px;background:#ececec;"></div>
<div style="position:absolute;left:792px;top:247px;width:198px;height:23px;background:#f0f0f0;"></div>
<svg style="position:absolute;left:798px;top:254px;" width="9" height="9" viewBox="0 0 9 9" shape-rendering="crispEdges"><defs><linearGradient id="mg" x1="0" y1="0" x2="0" y2="1"><stop offset="0" stop-color="#fff"/><stop offset="1" stop-color="#e0e0e0"/></linearGradient></defs><rect x="0.5" y="0.5" width="8" height="8" rx="1" fill="url(#mg)" stroke="#979797" shape-rendering="geometricPrecision"/><rect x="2" y="4" width="5" height="1" fill="#3d5ea8"/></svg>
<div class="t" style="position:absolute;left:812px;top:250px;font:normal 11px/16px 'Liberation Sans', sans-serif;color:#000;white-space:pre;">Relationships</div>
<svg style="position:absolute;left:796px;top:277px;" width="32" height="18" viewBox="0 0 32 18" shape-rendering="crispEdges"><path d="M1 1.5H16.5V12.5H31" fill="none" stroke="#6a6a6a"/><path d="M24 12.5 L31 8.3 M24 12.5 L31 16.7" stroke="#6a6a6a" shape-rendering="geometricPrecision"/></svg>
<svg style="position:absolute;left:796px;top:307px;" width="32" height="18" viewBox="0 0 32 18" shape-rendering="crispEdges"><path d="M1 1.5H16.5V12.5H31" fill="none" stroke="#6a6a6a" stroke-dasharray="3 2"/><path d="M24 12.5 L31 8.3 M24 12.5 L31 16.7" stroke="#6a6a6a" shape-rendering="geometricPrecision"/></svg>
<svg style="position:absolute;left:803px;top:336px;" width="18" height="13" viewBox="0 0 18 13" shape-rendering="crispEdges"><path d="M1.5 11.5 V8.5 A7 7 0 0 1 15.5 8.5 V11.5 Z M4 3.5 L12.5 11.5 M13 3.5 L4.5 11.5" fill="none" stroke="#6a6a6a" shape-rendering="geometricPrecision"/></svg>
<div class="t" style="position:absolute;left:831px;top:276px;font:normal 11px/16px 'Liberation Sans', sans-serif;color:#000;white-space:pre;">One to Many</div>
<div class="t" style="position:absolute;left:831px;top:306px;font:normal 11px/16px 'Liberation Sans', sans-serif;color:#000;white-space:pre;">One to Many (NI)</div>
<div class="t" style="position:absolute;left:831px;top:335px;font:normal 11px/16px 'Liberation Sans', sans-serif;color:#000;white-space:pre;">Subcategory</div>
<div style="position:absolute;left:792px;top:359px;width:198px;height:1px;background:#ececec;"></div>
<div style="position:absolute;left:791px;top:381px;width:200px;height:18px;border:1px solid #a0a0a0;border-radius:2px;background:#f0f0f0;"></div>
<svg style="position:absolute;left:796px;top:384px;" width="3" height="14" viewBox="0 0 3 14" shape-rendering="crispEdges"><rect x="0" y="0" width="3" height="1" fill="#c0c0c0"/><rect x="0" y="2" width="3" height="1" fill="#c0c0c0"/><rect x="0" y="4" width="3" height="1" fill="#c0c0c0"/><rect x="0" y="6" width="3" height="1" fill="#c0c0c0"/><rect x="0" y="8" width="3" height="1" fill="#c0c0c0"/><rect x="0" y="10" width="3" height="1" fill="#c0c0c0"/><rect x="0" y="12" width="3" height="1" fill="#c0c0c0"/></svg>
<div class="t" style="position:absolute;left:804px;top:383px;font:normal 11px/16px 'Liberation Sans', sans-serif;color:#000;white-space:pre;">Overview</div>
<svg style="position:absolute;left:968px;top:387px;" width="10" height="9" viewBox="0 0 10 9" shape-rendering="crispEdges"><path d="M3 0.5H9.5V6" fill="none" stroke="#000"/><rect x="0.5" y="3.5" width="6" height="5" fill="none" stroke="#000" stroke-width="1"/></svg>
<div style="position:absolute;left:791px;top:401px;width:201px;height:275px;background:#fff;"></div>
<div style="position:absolute;left:788px;top:401px;width:1px;height:275px;background:#e8e8e8;"></div>
<div style="position:absolute;left:860px;top:402px;width:130px;height:100px;background:#ffd9d9;border:1px solid #ffd9d9;"></div>
<div style="position:absolute;left:795px;top:403px;width:11px;height:8px;background:#ffffcc;border:1px solid #d8d8b8;"></div>
<div style="position:absolute;left:808px;top:403px;width:17px;height:22px;background:#ffffcc;border:1px solid #d8d8b8;"></div>
<div style="position:absolute;left:831px;top:403px;width:13px;height:6px;background:#ffffcc;border:1px solid #d8d8b8;"></div>
<div style="position:absolute;left:792px;top:413px;width:14px;height:42px;background:#ffffcc;border:1px solid #d8d8b8;"></div>
<div style="position:absolute;left:833px;top:416px;width:16px;height:7px;background:#ffffcc;border:1px solid #d8d8b8;"></div>
<div style="position:absolute;left:833px;top:424px;width:15px;height:12px;background:#ffffcc;border:1px solid #d8d8b8;"></div>
<div style="position:absolute;left:811px;top:444px;width:14px;height:7px;background:#ffffcc;border:1px solid #d8d8b8;"></div>
<div style="position:absolute;left:831px;top:447px;width:16px;height:10px;background:#ffffcc;border:1px solid #d8d8b8;"></div>
<div style="position:absolute;left:792px;top:454px;width:18px;height:22px;background:#ffffcc;border:1px solid #d8d8b8;"></div>
<div style="position:absolute;left:812px;top:460px;width:18px;height:9px;background:#ffffcc;border:1px solid #d8d8b8;"></div>
<div style="position:absolute;left:819px;top:469px;width:17px;height:9px;background:#ffffcc;border:1px solid #d8d8b8;"></div>
<div style="position:absolute;left:792px;top:479px;width:28px;height:11px;background:#ffffcc;border:1px solid #d8d8b8;"></div>
<div style="position:absolute;left:792px;top:491px;width:28px;height:9px;background:#ffffcc;border:1px solid #d8d8b8;"></div>
<div style="position:absolute;left:808px;top:427px;width:17px;height:11px;background:#ffccff;border:1px solid #e0b0e0;"></div>
<div style="position:absolute;left:862px;top:407px;width:18px;height:25px;background:#d0d0ff;border:1px solid #a8a8e0;"></div>
<div style="position:absolute;left:918px;top:407px;width:18px;height:7px;background:#ffffcc;border:1px solid #d8d8b8;"></div>
<div style="position:absolute;left:970px;top:406px;width:17px;height:23px;background:#ffffcc;border:1px solid #d8d8b8;"></div>
<div style="position:absolute;left:936px;top:421px;width:18px;height:18px;background:#ffffcc;border:1px solid #d8d8b8;"></div>
<div style="position:absolute;left:908px;top:432px;width:12px;height:11px;background:#ffffcc;border:1px solid #d8d8b8;"></div>
<div style="position:absolute;left:890px;top:446px;width:19px;height:6px;background:#ffffcc;border:1px solid #d8d8b8;"></div>
<div style="position:absolute;left:862px;top:446px;width:18px;height:25px;background:#ffffcc;border:1px solid #d8d8b8;"></div>
<div style="position:absolute;left:887px;top:461px;width:17px;height:6px;background:#ffffcc;border:1px solid #d8d8b8;"></div>
<div style="position:absolute;left:870px;top:472px;width:19px;height:8px;background:#ffffcc;border:1px solid #d8d8b8;"></div>
<div style="position:absolute;left:948px;top:477px;width:17px;height:9px;background:#ffffcc;border:1px solid #d8d8b8;"></div>
<div style="position:absolute;left:893px;top:486px;width:15px;height:6px;background:#ffffcc;border:1px solid #d8d8b8;"></div>
<div style="position:absolute;left:970px;top:489px;width:12px;height:7px;background:#ffffcc;border:1px solid #d8d8b8;"></div>
<div style="position:absolute;left:862px;top:494px;width:17px;height:6px;background:#ffffcc;border:1px solid #d8d8b8;"></div>
<div style="position:absolute;left:919px;top:455px;width:18px;height:31px;background:#00ffc8;border:1px solid #00e8b8;"></div>
<div style="position:absolute;left:825px;top:457px;width:52px;height:41px;border:1.5px solid #f00;"></div>
<div style="position:absolute;left:874px;top:495px;width:4px;height:4px;background:#f00;"></div>
<div style="position:absolute;left:791px;top:676px;width:200px;height:1px;background:#a0a0a0;"></div>
<div style="position:absolute;left:316px;top:365px;width:215px;height:186px;background:#fbfbfb;border:1px solid #5a9fe0;box-shadow:2px 2px 2px rgba(0,0,0,0.12);"></div>
<div style="position:absolute;left:319px;top:411px;width:209px;height:22px;background:#e1effd;border:1px solid #4a98e8;"></div>
<div class="t" style="position:absolute;left:350px;top:371px;font:normal 11px/16px 'Liberation Sans', sans-serif;color:#000;white-space:pre;font-size:11.6px;">New Table...</div>
<div class="t" style="position:absolute;left:486px;top:371px;font:normal 11px/16px 'Liberation Sans', sans-serif;color:#000;white-space:pre;font-size:11.6px;">Alt+T</div>
<div class="t" style="position:absolute;left:350px;top:393px;font:normal 11px/16px 'Liberation Sans', sans-serif;color:#000;white-space:pre;font-size:11.6px;">New View...</div>
<div class="t" style="position:absolute;left:486px;top:393px;font:normal 11px/16px 'Liberation Sans', sans-serif;color:#000;white-space:pre;font-size:11.6px;">Alt+V</div>
<div class="t" style="position:absolute;left:350px;top:415px;font:normal 11px/16px 'Liberation Sans', sans-serif;color:#000;white-space:pre;font-size:11.6px;">New Note...</div>
<div class="t" style="position:absolute;left:486px;top:415px;font:normal 11px/16px 'Liberation Sans', sans-serif;color:#000;white-space:pre;font-size:11.6px;">Alt+N</div>
<div class="t" style="position:absolute;left:350px;top:437px;font:normal 11px/16px 'Liberation Sans', sans-serif;color:#000;white-space:pre;font-size:11.6px;">New Relationship...</div>
<div class="t" style="position:absolute;left:486px;top:437px;font:normal 11px/16px 'Liberation Sans', sans-serif;color:#000;white-space:pre;font-size:11.6px;">Alt+F</div>
<div class="t" style="position:absolute;left:350px;top:459px;font:normal 11px/16px 'Liberation Sans', sans-serif;color:#000;white-space:pre;font-size:11.6px;">New Subcategory...</div>
<div class="t" style="position:absolute;left:486px;top:459px;font:normal 11px/16px 'Liberation Sans', sans-serif;color:#000;white-space:pre;font-size:11.6px;">Alt+S</div>
<div class="t" style="position:absolute;left:350px;top:481px;font:normal 11px/16px 'Liberation Sans', sans-serif;color:#000;white-space:pre;font-size:11.6px;">New Region...</div>
<div style="position:absolute;left:350px;top:500px;width:178px;height:1px;background:#d7d7d7;"></div>
<div class="t" style="position:absolute;left:350px;top:506px;font:normal 11px/16px 'Liberation Sans', sans-serif;color:#a0a0a0;white-space:pre;font-size:11.6px;">Paste</div>
<div class="t" style="position:absolute;left:486px;top:506px;font:normal 11px/16px 'Liberation Sans', sans-serif;color:#a0a0a0;white-space:pre;font-size:11.6px;">Ctrl+V</div>
<div style="position:absolute;left:350px;top:525px;width:178px;height:1px;background:#d7d7d7;"></div>
<div class="t" style="position:absolute;left:350px;top:531px;font:normal 11px/16px 'Liberation Sans', sans-serif;color:#000;white-space:pre;font-size:11.6px;">Select All</div>
<div class="t" style="position:absolute;left:486px;top:531px;font:normal 11px/16px 'Liberation Sans', sans-serif;color:#000;white-space:pre;font-size:11.6px;">Ctrl+A</div>
<svg style="position:absolute;left:323px;top:372px;" width="14" height="12" viewBox="0 0 14 12" shape-rendering="crispEdges"><rect x="0.5" y="1.5" width="13" height="10" fill="#fff" stroke="#a9a9a9"/><rect x="0" y="0" width="14" height="3" fill="#47a0d8"/><rect x="1" y="1" width="12" height="1" fill="#dff0fb"/><path d="M5 3V11 M9 3V11 M1 5.5H13 M1 8.5H13" stroke="#bdbdbd"/></svg>
<svg style="position:absolute;left:322px;top:396px;" width="17" height="9" viewBox="0 0 17 9" shape-rendering="crispEdges"><g fill="none" stroke="#304a70" stroke-width="1.1" shape-rendering="geometricPrecision"><circle cx="3.5" cy="5.5" r="2.6"/><circle cx="10" cy="5.5" r="2.6"/><path d="M6.1 5.5 Q6.8 4.5 7.4 5.5 M1 4 L3.5 0.8 L5 1 M12.6 5 L14 1.5 Q15.5 0.5 16.5 1.5"/></g></svg>
<svg style="position:absolute;left:324px;top:415px;" width="12" height="14" viewBox="0 0 12 14" shape-rendering="crispEdges"><path d="M0.5 0.5H8L11.5 4V13.5H0.5Z" fill="#fff" stroke="#9a7a40"/><path d="M8 0.5V4H11.5" fill="#eee" stroke="#9a7a40"/><g fill="#4060a8"><rect x="2" y="4" width="5" height="1"/><rect x="2" y="6" width="8" height="1"/><rect x="2" y="8" width="8" height="1"/><rect x="2" y="10" width="8" height="1"/></g></svg>
<svg style="position:absolute;left:324px;top:439px;" width="14" height="12" viewBox="0 0 14 12" shape-rendering="crispEdges"><defs><linearGradient id="rg2" x1="0" y1="0" x2="0" y2="1"><stop offset="0" stop-color="#fff3c0"/><stop offset="1" stop-color="#f5c860"/></linearGradient></defs><rect x="8.5" y="0.5" width="5" height="4" fill="url(#rg2)" stroke="#c0832a"/><rect x="0.5" y="7.5" width="5" height="4" fill="url(#rg2)" stroke="#c0832a"/><path d="M6 9.5H10.5V5" fill="none" stroke="#222"/></svg>
<svg style="position:absolute;left:325px;top:463px;" width="11" height="8" viewBox="0 0 11 8" shape-rendering="crispEdges"><path d="M0.5 7.5 V3.2 L3 0.5 H8 L10.5 3.2 V7.5 Z M2.8 1.3 L7.6 7.5 M8.2 1.3 L3.2 7.5" fill="none" stroke="#111" shape-rendering="geometricPrecision"/></svg>
<svg style="position:absolute;left:324px;top:481px;" width="12" height="14" viewBox="0 0 12 14" shape-rendering="crispEdges"><rect x="0.5" y="0.5" width="11" height="13" fill="#f2f2f2" stroke="#a0a0a0"/></svg>
<svg style="position:absolute;left:447px;top:416px;" width="14" height="21" viewBox="0 0 14 21" shape-rendering="crispEdges"><path d="M1.5 1.5 L1.5 17.5 L5 14 L7.8 19.6 Q8.6 20.3 9.6 19.6 L10.3 19 Q10.8 18.3 10.4 17.6 L7.8 12.8 L12.6 12.8 Z" fill="#fff" stroke="#000" stroke-width="1.1" stroke-linejoin="round" shape-rendering="geometricPrecision"/></svg>
</body></html>
